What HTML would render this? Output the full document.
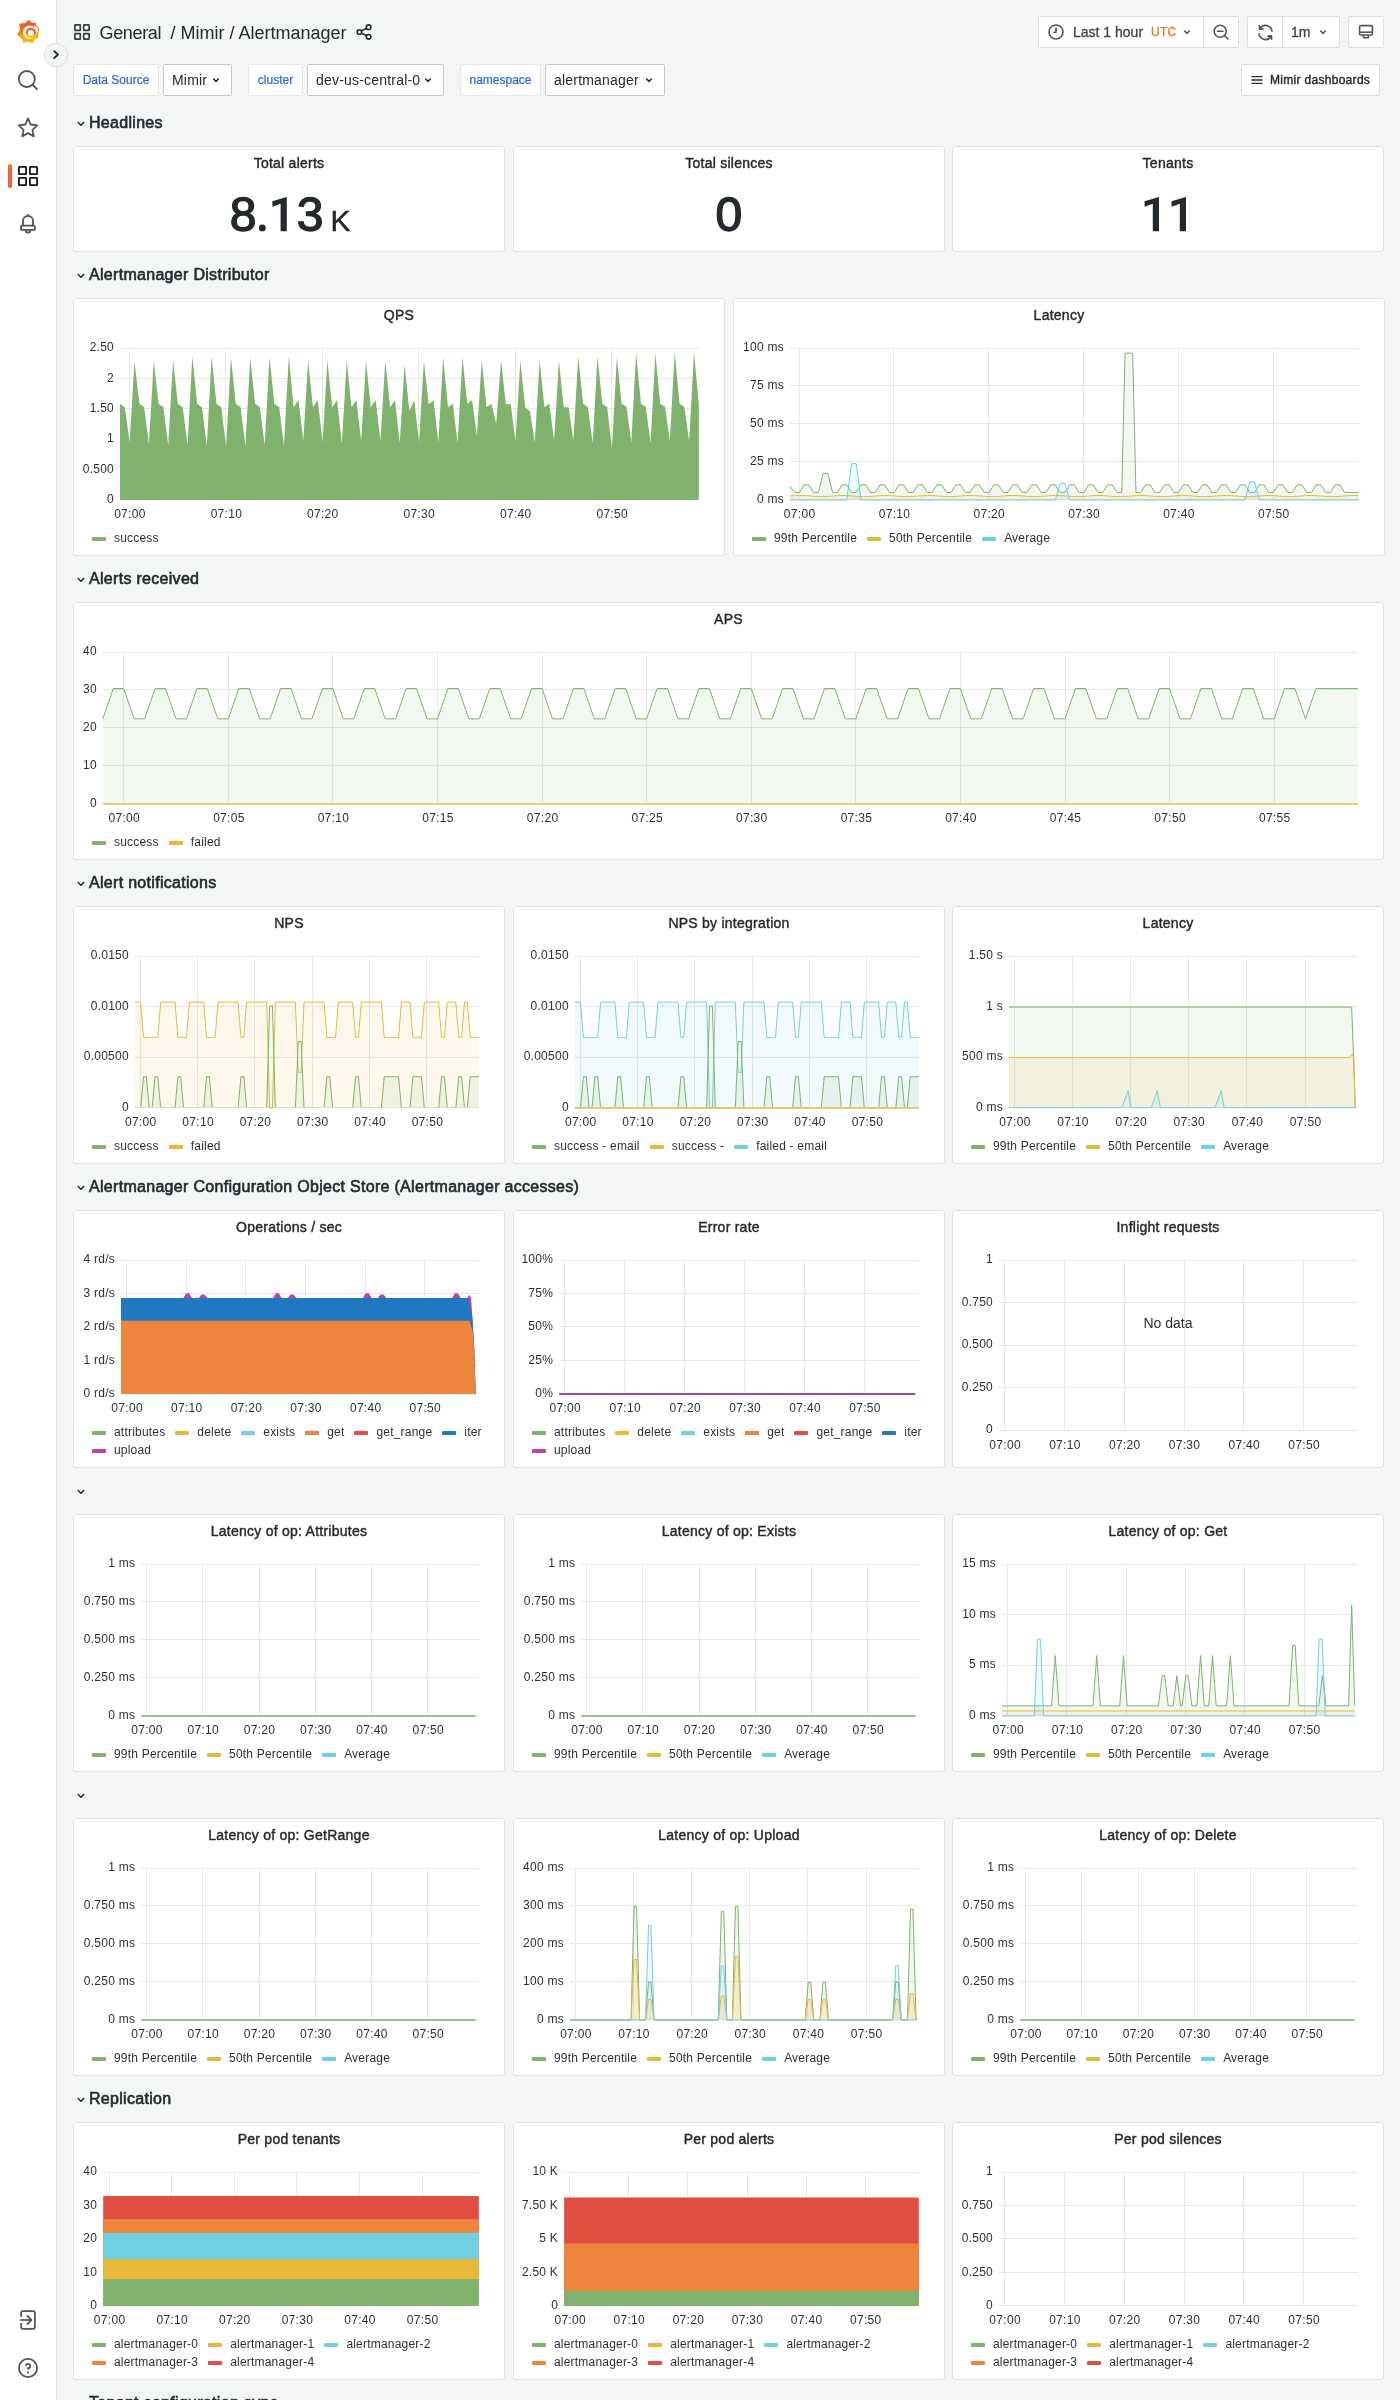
<!DOCTYPE html><html><head><meta charset="utf-8"><style>
*{box-sizing:border-box}
html,body{margin:0;padding:0}
body{width:1400px;height:2400px;overflow:hidden;background:#f4f5f5;position:relative;font-family:"Liberation Sans",sans-serif;color:#24292e}
div,svg{position:absolute}
#sb{left:0;top:0;width:57px;height:2400px;background:#fff;border-right:1px solid #e1e2e3}
.ic{position:absolute}
.pn{background:#fff;border:1px solid #e1e2e3;border-radius:3px}
.pt{text-align:center;font-size:14px;line-height:18px;letter-spacing:0.25px;-webkit-text-stroke:0.42px #24292e}
.rh{left:73px;height:30px;line-height:30px;font-size:16px;padding-left:16px;letter-spacing:0.3px;-webkit-text-stroke:0.6px #24292e}
.rh svg{left:3px;top:11.3px}
.yl{font-size:12px;line-height:16px;text-align:right;white-space:nowrap;color:#2c3036;letter-spacing:0.25px}
.xl{font-size:12px;line-height:16px;width:60px;text-align:center;white-space:nowrap;color:#2c3036;letter-spacing:0.3px}
.lg{font-size:12px;line-height:16px;white-space:nowrap;color:#2c3036;letter-spacing:0.2px}
.li{display:inline-block;margin-right:10px}
.li i{display:inline-block;width:14px;height:4px;border-radius:1px;vertical-align:middle;margin-right:8px;position:relative;top:0px}
.nd{text-align:center;font-size:14px;line-height:18px;color:#2c3036}
.stat{text-align:center;color:#24292e;-webkit-text-stroke:1.4px #24292e}
.btn{background:#fff;border:1px solid #dcdee0;border-radius:2px;height:32px}
.vl{background:#fff;border:1px solid #e4e6e8;border-radius:2px;height:32px;line-height:30px;font-size:12px;color:#2a66dc;text-align:center;-webkit-text-stroke:0.2px #2a66dc}
.vv{background:#fff;border:1px solid #c7c9cc;border-radius:2px;height:32px;line-height:30px;font-size:14px;color:#24292e;padding-left:8px;letter-spacing:0.2px}
</style></head><body><div id="root" style="left:0;top:0;width:1400px;height:2400px;will-change:transform"><div id="sb"></div>
<svg style="left:14px;top:17px" width="28" height="29" viewBox="0 0 1400 1450">
<defs><linearGradient id="gl" x1="0" y1="0" x2="0" y2="1"><stop offset="0.2" stop-color="#F05A28"/><stop offset="0.55" stop-color="#F27A1A"/><stop offset="0.72" stop-color="#FBAE0F"/><stop offset="1" stop-color="#FBB80C"/></linearGradient></defs>
<path fill="url(#gl)" d="M740 140 L860 280 L1090 300 L1130 460 L1220 560 L1250 680 L1200 860 L1230 1010 L1010 1130 L990 1270 L840 1290 L690 1240 L470 1290 L420 1130 L300 1020 L150 880 L260 720 L300 560 L260 340 L560 300 Z"/>
<circle cx="790" cy="760" r="340" fill="#fff"/>
<path d="M1000 420 L1130 400 L1230 560 L1260 760 L1150 760 Z" fill="#fff"/>
<path d="M1030 400 C1150 450 1235 560 1230 720" fill="none" stroke="#F26A22" stroke-width="55"/>
<circle cx="850" cy="800" r="205" fill="none" stroke="url(#gl)" stroke-width="110"/>
<path d="M690 860 C740 960 860 980 900 920" fill="none" stroke="#fff" stroke-width="45"/>
<path d="M700 900 C760 960 850 960 880 915" fill="none" stroke="#F8B21C" stroke-width="35"/>
</svg>
<svg style="left:43px;top:42px" width="26" height="26" viewBox="0 0 26 26"><circle cx="13" cy="13" r="11.6" fill="#f4f5f5" stroke="#dcdde0" stroke-width="1"/><path d="M11.3 9.2 L15 12.6 L11.3 16" fill="none" stroke="#24292e" stroke-width="1.9" stroke-linecap="round" stroke-linejoin="round"/></svg>
<svg style="left:16px;top:68px" width="24" height="24" viewBox="0 0 24 24"><circle cx="10.8" cy="11" r="8" fill="none" stroke="#51565c" stroke-width="1.8"/><path d="M16.6 16.8 L21 21.2" stroke="#51565c" stroke-width="1.9" stroke-linecap="round"/></svg>
<svg style="left:16px;top:116px" width="24" height="24" viewBox="0 0 24 24"><path d="M12.00 2.41 L14.71 8.51 L21.27 9.41 L16.41 13.82 L17.76 20.38 L12.00 17.10 L6.24 20.38 L7.59 13.82 L2.73 9.41 L9.29 8.51 Z" fill="none" stroke="#51565c" stroke-width="1.8" stroke-linejoin="round"/></svg>
<div style="left:8px;top:164px;width:4px;height:24px;border-radius:2px;background:linear-gradient(#f47a20,#f55f3e 30%,#f55f3e)"></div>
<svg style="left:16px;top:164px" width="24" height="24" viewBox="0 0 24 24" fill="none" stroke="#111418" stroke-width="1.8"><rect x="2.9" y="2.9" width="7.2" height="7.2" rx="0.6"/><rect x="13.9" y="2.9" width="7.2" height="7.2" rx="0.6"/><rect x="2.9" y="13.9" width="7.2" height="7.2" rx="0.6"/><rect x="13.9" y="13.9" width="7.2" height="7.2" rx="0.6"/></svg>
<svg style="left:16px;top:212px" width="24" height="24" viewBox="0 0 24 24" fill="none" stroke="#51565c" stroke-width="1.8" stroke-linejoin="round"><path d="M12 2 L12 3.6"/><path d="M7 13.8 L7 9 A5 5 0 0 1 17 9 L17 13.8"/><path d="M5.1 14.4 A1.2 1.2 0 0 1 6.3 13.6 L17.7 13.6 A1.2 1.2 0 0 1 18.9 14.6 L18.9 17.8 L5 17.8 Z"/><path d="M9.6 18.2 A2.4 2.4 0 0 0 14.4 18.2"/></svg>
<svg style="left:16px;top:2308px" width="24" height="24" viewBox="0 0 24 24" fill="none" stroke="#51565c" stroke-width="1.75" stroke-linecap="butt" stroke-linejoin="round"><path d="M5.1 8.8 L5.1 4.8 A1.7 1.7 0 0 1 6.8 3.1 L17.2 3.1 A1.7 1.7 0 0 1 18.9 4.8 L18.9 19.1 A1.7 1.7 0 0 1 17.2 20.8 L6.8 20.8 A1.7 1.7 0 0 1 5.1 19.1 L5.1 15.0"/><path d="M4.2 12 L15.6 12"/><path d="M11 7.4 L15.6 12 L11 16.6"/></svg>
<svg style="left:16px;top:2356px" width="24" height="24" viewBox="0 0 24 24" fill="none" stroke="#51565c" stroke-width="1.75" stroke-linecap="butt"><circle cx="12" cy="12" r="9.1"/><path d="M9.9 9.9 A2.15 2.15 0 1 1 12 12.2 L12 13.6"/><rect x="11.1" y="15.6" width="1.8" height="1.7" fill="#51565c" stroke="none"/></svg>
<svg style="left:73px;top:23px" width="18" height="18" viewBox="0 0 18 18" fill="none" stroke="#3a3f45" stroke-width="1.7"><rect x="1.9" y="1.9" width="5.4" height="5.4" rx="0.4"/><rect x="10.7" y="1.9" width="5.4" height="5.4" rx="0.4"/><rect x="1.9" y="10.7" width="5.4" height="5.4" rx="0.4"/><rect x="10.7" y="10.7" width="5.4" height="5.4" rx="0.4"/></svg>
<div style="left:99.5px;top:22px;font-size:18px;line-height:22px;white-space:nowrap;color:#24292e;letter-spacing:-0.35px">General</div>
<div style="left:170.5px;top:22px;font-size:18px;line-height:22px;white-space:nowrap;color:#24292e">/ Mimir / Alertmanager</div>
<svg style="left:355px;top:23px" width="18" height="18" viewBox="0 0 18 18" fill="none" stroke="#24292e" stroke-width="1.6"><circle cx="13.6" cy="4.2" r="2.3"/><circle cx="4.4" cy="9" r="2.3"/><circle cx="13.6" cy="13.8" r="2.3"/><path d="M6.5 7.9 L11.5 5.3 M6.5 10.1 L11.5 12.7"/></svg>
<div class="btn" style="left:1038px;top:16px;width:201px"></div>
<div style="left:1203px;top:17px;width:1px;height:30px;background:#dcdee0"></div>
<svg style="left:1047px;top:23px" width="18" height="18" viewBox="0 0 18 18" fill="none" stroke="#51565c" stroke-width="1.6" stroke-linecap="round" stroke-linejoin="round"><circle cx="9" cy="9" r="7"/><path d="M9 5.2 L9 9.2 L6.9 9.2"/></svg>
<div style="left:1073px;top:23px;font-size:14px;line-height:18px;color:#3e4349;white-space:nowrap;-webkit-text-stroke:0.3px #3e4349">Last 1 hour</div>
<div style="left:1151px;top:24px;font-size:12px;line-height:16px;color:#e8731a;white-space:nowrap;letter-spacing:0.3px;-webkit-text-stroke:0.25px #e8731a">UTC</div>
<svg style="left:1182px;top:27px" width="10" height="10" viewBox="0 0 10 10"><path d="M2.6 4 L5 6.4 L7.4 4" fill="none" stroke="#51565c" stroke-width="1.5" stroke-linecap="round" stroke-linejoin="round"/></svg>
<svg style="left:1212px;top:23px" width="18" height="18" viewBox="0 0 18 18" fill="none" stroke="#51565c" stroke-width="1.6" stroke-linecap="round"><circle cx="8.2" cy="8.2" r="6"/><path d="M5.4 8.2 L11 8.2 M12.6 12.6 L16 16"/></svg>
<div class="btn" style="left:1247px;top:16px;width:93px"></div>
<div style="left:1282px;top:17px;width:1px;height:30px;background:#dcdee0"></div>
<svg style="left:1255.5px;top:22.5px" width="19" height="19" viewBox="0 0 18 18" fill="none" stroke="#51565c" stroke-width="1.6" stroke-linecap="round" stroke-linejoin="round"><path d="M15.2 7.6 A6.3 6.3 0 0 0 3.6 5.4"/><path d="M3.2 2.6 L3.4 5.8 L6.6 5.6"/><path d="M2.8 10.4 A6.3 6.3 0 0 0 14.4 12.6"/><path d="M14.8 15.4 L14.6 12.2 L11.4 12.4"/></svg>
<div style="left:1291px;top:23px;font-size:14px;line-height:18px;color:#3e4349;-webkit-text-stroke:0.3px #3e4349">1m</div>
<svg style="left:1318px;top:27px" width="10" height="10" viewBox="0 0 10 10"><path d="M2.6 4 L5 6.4 L7.4 4" fill="none" stroke="#51565c" stroke-width="1.5" stroke-linecap="round" stroke-linejoin="round"/></svg>
<div class="btn" style="left:1348px;top:16px;width:36px"></div>
<svg style="left:1357px;top:23px" width="18" height="18" viewBox="0 0 18 18" fill="none" stroke="#51565c" stroke-width="1.6" stroke-linejoin="round"><rect x="2.6" y="2.6" width="12.8" height="9.4" rx="1.2"/><path d="M2.6 9.2 L15.4 9.2"/><path d="M6.6 12 L6.6 14.8 L11.4 14.8 L11.4 12"/></svg>
<div class="vl" style="left:73px;top:64px;width:86px">Data Source</div>
<div class="vv" style="left:163px;top:64px;width:69px">Mimir</div>
<svg style="left:211px;top:75px" width="10" height="10" viewBox="0 0 10 10"><path d="M2.6 4 L5 6.4 L7.4 4" fill="none" stroke="#24292e" stroke-width="1.5" stroke-linecap="round" stroke-linejoin="round"/></svg>
<div class="vl" style="left:248px;top:64px;width:55px">cluster</div>
<div class="vv" style="left:307px;top:64px;width:137px">dev-us-central-0</div>
<svg style="left:423px;top:75px" width="10" height="10" viewBox="0 0 10 10"><path d="M2.6 4 L5 6.4 L7.4 4" fill="none" stroke="#24292e" stroke-width="1.5" stroke-linecap="round" stroke-linejoin="round"/></svg>
<div class="vl" style="left:460px;top:64px;width:81px">namespace</div>
<div class="vv" style="left:545px;top:64px;width:120px">alertmanager</div>
<svg style="left:644px;top:75px" width="10" height="10" viewBox="0 0 10 10"><path d="M2.6 4 L5 6.4 L7.4 4" fill="none" stroke="#24292e" stroke-width="1.5" stroke-linecap="round" stroke-linejoin="round"/></svg>
<div class="btn" style="left:1241px;top:64px;width:139px"></div>
<svg style="left:1249px;top:72px" width="16" height="16" viewBox="0 0 16 16" stroke="#24292e" stroke-width="1.4"><path d="M2.5 4.6 L13.5 4.6 M2.5 8 L13.5 8 M2.5 11.4 L13.5 11.4"/></svg>
<div style="left:1270px;top:72px;font-size:12px;line-height:16px;color:#24292e;white-space:nowrap;letter-spacing:0.3px;-webkit-text-stroke:0.4px #24292e">Mimir dashboards</div>
<div class="rh" style="top:108px"><svg width="10" height="10" viewBox="0 0 10 10"><path d="M2.3 3.5 L5 6.2 L7.7 3.5" fill="none" stroke="#24292e" stroke-width="1.5" stroke-linecap="round" stroke-linejoin="round"/></svg>Headlines</div>
<div class="pn" style="left:73px;top:146px;width:432px;height:106px"></div>
<div class="pt" style="left:73px;top:154px;width:432px">Total alerts</div>
<div class="pn" style="left:513px;top:146px;width:432px;height:106px"></div>
<div class="pt" style="left:513px;top:154px;width:432px">Total silences</div>
<div class="pn" style="left:952px;top:146px;width:432px;height:106px"></div>
<div class="pt" style="left:952px;top:154px;width:432px">Tenants</div>
<div style="left:229.8px;top:186.9px;font-size:48px;line-height:56px;-webkit-text-stroke:1.4px #24292e;color:#24292e;white-space:nowrap">8</div>
<div style="left:296.7px;top:186.9px;font-size:48px;line-height:56px;-webkit-text-stroke:1.4px #24292e;color:#24292e;white-space:nowrap">3</div>
<div style="left:330.4px;top:193px;font-size:30px;line-height:56px;-webkit-text-stroke:0.5px #24292e;color:#24292e">K</div>
<div style="left:715.5px;top:186.9px;font-size:48px;line-height:56px;-webkit-text-stroke:1.4px #24292e;color:#24292e;white-space:nowrap">0</div>
<svg style="left:0;top:0;overflow:visible" width="1" height="1"><path d="M272.3 201.2 L286.6 196.9 L286.8 196.9 L286.8 231.2 L280.6 231.2 L280.6 203.8 L272.5 206.8 Z" fill="#24292e"/><path d="M1144.5 201.2 L1158.8 196.9 L1159.0 196.9 L1159.0 231.2 L1152.8 231.2 L1152.8 203.8 L1144.7 206.8 Z" fill="#24292e"/><path d="M1171.5 201.2 L1185.8 196.9 L1186.0 196.9 L1186.0 231.2 L1179.8 231.2 L1179.8 203.8 L1171.7 206.8 Z" fill="#24292e"/><circle cx="262.3" cy="227.9" r="3.45" fill="#24292e"/></svg>
<div class="rh" style="top:260px"><svg width="10" height="10" viewBox="0 0 10 10"><path d="M2.3 3.5 L5 6.2 L7.7 3.5" fill="none" stroke="#24292e" stroke-width="1.5" stroke-linecap="round" stroke-linejoin="round"/></svg>Alertmanager Distributor</div>
<div class="pn" style="left:73px;top:298px;width:652px;height:258px"></div>
<div class="pt" style="left:73px;top:306px;width:652px">QPS</div>
<svg style="left:0;top:0;overflow:visible" width="1" height="1"><line x1="120.0" y1="499.5" x2="698.8" y2="499.5" stroke="#e7e8e9"/><line x1="120.0" y1="469.5" x2="698.8" y2="469.5" stroke="#e7e8e9"/><line x1="120.0" y1="438.5" x2="698.8" y2="438.5" stroke="#e7e8e9"/><line x1="120.0" y1="408.5" x2="698.8" y2="408.5" stroke="#e7e8e9"/><line x1="120.0" y1="378.5" x2="698.8" y2="378.5" stroke="#e7e8e9"/><line x1="120.0" y1="348.5" x2="698.8" y2="348.5" stroke="#e7e8e9"/><line x1="129.5" y1="348.6" x2="129.5" y2="500.0" stroke="#e7e8e9"/><line x1="225.5" y1="348.6" x2="225.5" y2="500.0" stroke="#e7e8e9"/><line x1="322.5" y1="348.6" x2="322.5" y2="500.0" stroke="#e7e8e9"/><line x1="418.5" y1="348.6" x2="418.5" y2="500.0" stroke="#e7e8e9"/><line x1="515.5" y1="348.6" x2="515.5" y2="500.0" stroke="#e7e8e9"/><line x1="611.5" y1="348.6" x2="611.5" y2="500.0" stroke="#e7e8e9"/><path d="M120.00,403.71 L124.82,407.34 L129.65,442.47 L134.47,361.01 L139.29,403.71 L144.12,407.34 L148.94,443.68 L153.76,361.01 L158.59,403.71 L163.41,407.34 L168.23,444.89 L173.06,360.41 L177.88,403.71 L182.70,407.34 L187.53,444.89 L192.35,356.17 L197.17,403.71 L202.00,407.34 L206.82,446.10 L211.64,356.17 L216.47,403.71 L221.29,407.34 L226.11,446.71 L230.94,357.38 L235.76,403.71 L240.58,407.34 L245.41,446.10 L250.23,357.38 L255.05,403.71 L259.88,407.34 L264.70,444.89 L269.52,356.78 L274.35,403.71 L279.17,407.34 L283.99,446.10 L288.82,356.17 L293.64,407.34 L298.46,400.08 L303.29,440.65 L308.11,360.41 L312.93,407.34 L317.76,400.08 L322.58,442.47 L327.40,361.01 L332.23,407.34 L337.05,400.08 L341.87,443.68 L346.70,361.01 L351.52,407.34 L356.34,400.08 L361.17,440.65 L365.99,361.01 L370.81,407.34 L375.64,400.08 L380.46,440.65 L385.28,360.41 L390.11,407.34 L394.93,400.08 L399.75,443.07 L404.58,364.65 L409.40,410.98 L414.22,400.08 L419.05,442.47 L423.87,361.01 L428.69,404.32 L433.52,400.08 L438.34,442.47 L443.16,357.38 L447.99,407.34 L452.81,403.71 L457.63,443.07 L462.46,357.38 L467.28,403.71 L472.10,400.08 L476.93,435.81 L481.75,360.41 L486.57,407.34 L491.40,403.71 L496.22,423.69 L501.04,360.41 L505.87,404.32 L510.69,403.71 L515.51,441.26 L520.34,361.01 L525.16,407.34 L529.98,411.58 L534.81,442.47 L539.63,361.01 L544.45,407.34 L549.28,403.71 L554.10,440.65 L558.92,361.01 L563.75,407.34 L568.57,407.34 L573.39,440.65 L578.22,356.17 L583.04,403.71 L587.86,407.34 L592.69,443.07 L597.51,356.17 L602.33,403.71 L607.16,407.34 L611.98,448.52 L616.80,357.38 L621.63,403.71 L626.45,406.74 L631.27,442.47 L636.10,353.14 L640.92,403.71 L645.74,406.74 L650.57,443.07 L655.39,353.14 L660.21,403.71 L665.04,406.74 L669.86,441.26 L674.68,352.54 L679.51,403.71 L684.33,406.74 L689.15,441.26 L693.98,352.54 L698.80,403.71 L698.80,500.00 L120.00,500.00 Z" fill="#7EB26D" fill-opacity="1.0"/></svg>
<div class="yl" style="right:1286.0px;top:490.8px">0</div>
<div class="yl" style="right:1286.0px;top:460.5px">0.500</div>
<div class="yl" style="right:1286.0px;top:430.2px">1</div>
<div class="yl" style="right:1286.0px;top:400.0px">1.50</div>
<div class="yl" style="right:1286.0px;top:369.7px">2</div>
<div class="yl" style="right:1286.0px;top:339.4px">2.50</div>
<div class="xl" style="left:99.9px;top:506.1px">07:00</div>
<div class="xl" style="left:196.4px;top:506.1px">07:10</div>
<div class="xl" style="left:292.8px;top:506.1px">07:20</div>
<div class="xl" style="left:389.3px;top:506.1px">07:30</div>
<div class="xl" style="left:485.8px;top:506.1px">07:40</div>
<div class="xl" style="left:582.2px;top:506.1px">07:50</div>
<div class="lg" style="left:92px;top:530.3px"><span class="li"><i style="background:#7EB26D"></i>success</span></div>
<div class="pn" style="left:733px;top:298px;width:652px;height:258px"></div>
<div class="pt" style="left:733px;top:306px;width:652px">Latency</div>
<svg style="left:0;top:0;overflow:visible" width="1" height="1"><line x1="789.9" y1="499.5" x2="1358.8" y2="499.5" stroke="#e7e8e9"/><line x1="789.9" y1="461.5" x2="1358.8" y2="461.5" stroke="#e7e8e9"/><line x1="789.9" y1="423.5" x2="1358.8" y2="423.5" stroke="#e7e8e9"/><line x1="789.9" y1="385.5" x2="1358.8" y2="385.5" stroke="#e7e8e9"/><line x1="789.9" y1="348.5" x2="1358.8" y2="348.5" stroke="#e7e8e9"/><line x1="799.5" y1="348.6" x2="799.5" y2="500.0" stroke="#e7e8e9"/><line x1="893.5" y1="348.6" x2="893.5" y2="500.0" stroke="#e7e8e9"/><line x1="988.5" y1="348.6" x2="988.5" y2="500.0" stroke="#e7e8e9"/><line x1="1083.5" y1="348.6" x2="1083.5" y2="500.0" stroke="#e7e8e9"/><line x1="1178.5" y1="348.6" x2="1178.5" y2="500.0" stroke="#e7e8e9"/><line x1="1273.5" y1="348.6" x2="1273.5" y2="500.0" stroke="#e7e8e9"/><path d="M789.90,486.37 L794.64,492.43 L799.38,492.43 L804.12,484.86 L808.86,484.86 L813.60,492.43 L818.35,492.43 L823.09,473.50 L827.83,473.50 L832.57,492.43 L837.31,492.43 L842.05,484.86 L846.79,484.86 L851.53,492.43 L856.27,492.43 L861.01,484.86 L865.75,484.86 L870.49,492.43 L875.24,492.43 L879.98,484.86 L884.72,484.86 L889.46,492.43 L894.20,492.43 L898.94,484.86 L903.68,484.86 L908.42,492.43 L913.16,492.43 L917.90,484.86 L922.64,484.86 L927.38,492.43 L932.12,492.43 L936.87,484.86 L941.61,484.86 L946.35,492.43 L951.09,492.43 L955.83,484.86 L960.57,484.86 L965.31,492.43 L970.05,492.43 L974.79,484.86 L979.53,484.86 L984.27,492.43 L989.01,492.43 L993.76,484.86 L998.50,484.86 L1003.24,492.43 L1007.98,492.43 L1012.72,484.86 L1017.46,484.86 L1022.20,492.43 L1026.94,492.43 L1031.68,484.86 L1036.42,484.86 L1041.16,492.43 L1045.90,492.43 L1050.65,484.86 L1055.39,484.86 L1060.13,492.43 L1064.87,492.43 L1069.61,484.86 L1074.35,484.86 L1079.09,492.43 L1083.83,492.43 L1088.57,484.86 L1093.31,484.86 L1098.05,492.43 L1102.80,492.43 L1107.54,484.86 L1112.28,484.86 L1117.02,492.43 L1121.76,492.43 L1125.08,353.14 L1132.66,353.14 L1135.98,492.43 L1140.72,492.43 L1145.46,484.86 L1150.20,484.86 L1154.94,492.43 L1159.68,492.43 L1164.43,484.86 L1169.17,484.86 L1173.91,492.43 L1178.65,492.43 L1183.39,484.86 L1188.13,484.86 L1192.87,492.43 L1197.61,492.43 L1202.35,484.86 L1207.09,484.86 L1211.83,492.43 L1216.57,492.43 L1221.32,484.86 L1226.06,484.86 L1230.80,492.43 L1235.54,492.43 L1240.28,484.86 L1245.02,484.86 L1249.76,492.43 L1254.50,492.43 L1259.24,484.86 L1263.98,484.86 L1268.72,492.43 L1273.46,492.43 L1278.21,484.86 L1282.95,484.86 L1287.69,492.43 L1292.43,492.43 L1297.17,484.86 L1301.91,484.86 L1306.65,492.43 L1311.39,492.43 L1316.13,484.86 L1320.87,484.86 L1325.61,492.43 L1330.36,492.43 L1335.10,484.86 L1339.84,484.86 L1344.58,492.43 L1349.32,492.43 L1354.06,492.43 L1358.80,492.43 L1358.80,500.00 L789.90,500.00 Z" fill="#7EB26D" fill-opacity="0.1"/><path d="M789.90,486.37 L794.64,492.43 L799.38,492.43 L804.12,484.86 L808.86,484.86 L813.60,492.43 L818.35,492.43 L823.09,473.50 L827.83,473.50 L832.57,492.43 L837.31,492.43 L842.05,484.86 L846.79,484.86 L851.53,492.43 L856.27,492.43 L861.01,484.86 L865.75,484.86 L870.49,492.43 L875.24,492.43 L879.98,484.86 L884.72,484.86 L889.46,492.43 L894.20,492.43 L898.94,484.86 L903.68,484.86 L908.42,492.43 L913.16,492.43 L917.90,484.86 L922.64,484.86 L927.38,492.43 L932.12,492.43 L936.87,484.86 L941.61,484.86 L946.35,492.43 L951.09,492.43 L955.83,484.86 L960.57,484.86 L965.31,492.43 L970.05,492.43 L974.79,484.86 L979.53,484.86 L984.27,492.43 L989.01,492.43 L993.76,484.86 L998.50,484.86 L1003.24,492.43 L1007.98,492.43 L1012.72,484.86 L1017.46,484.86 L1022.20,492.43 L1026.94,492.43 L1031.68,484.86 L1036.42,484.86 L1041.16,492.43 L1045.90,492.43 L1050.65,484.86 L1055.39,484.86 L1060.13,492.43 L1064.87,492.43 L1069.61,484.86 L1074.35,484.86 L1079.09,492.43 L1083.83,492.43 L1088.57,484.86 L1093.31,484.86 L1098.05,492.43 L1102.80,492.43 L1107.54,484.86 L1112.28,484.86 L1117.02,492.43 L1121.76,492.43 L1125.08,353.14 L1132.66,353.14 L1135.98,492.43 L1140.72,492.43 L1145.46,484.86 L1150.20,484.86 L1154.94,492.43 L1159.68,492.43 L1164.43,484.86 L1169.17,484.86 L1173.91,492.43 L1178.65,492.43 L1183.39,484.86 L1188.13,484.86 L1192.87,492.43 L1197.61,492.43 L1202.35,484.86 L1207.09,484.86 L1211.83,492.43 L1216.57,492.43 L1221.32,484.86 L1226.06,484.86 L1230.80,492.43 L1235.54,492.43 L1240.28,484.86 L1245.02,484.86 L1249.76,492.43 L1254.50,492.43 L1259.24,484.86 L1263.98,484.86 L1268.72,492.43 L1273.46,492.43 L1278.21,484.86 L1282.95,484.86 L1287.69,492.43 L1292.43,492.43 L1297.17,484.86 L1301.91,484.86 L1306.65,492.43 L1311.39,492.43 L1316.13,484.86 L1320.87,484.86 L1325.61,492.43 L1330.36,492.43 L1335.10,484.86 L1339.84,484.86 L1344.58,492.43 L1349.32,492.43 L1354.06,492.43 L1358.80,492.43" fill="none" stroke="#7EB26D" stroke-width="1" stroke-opacity="1" stroke-linejoin="round"/><path d="M789.90,496.06 L794.64,495.67 L799.38,495.47 L804.12,495.54 L808.86,495.86 L813.60,496.28 L818.35,496.59 L823.09,496.66 L827.83,496.45 L832.57,496.05 L837.31,495.67 L842.05,495.47 L846.79,495.55 L851.53,495.87 L856.27,496.29 L861.01,496.60 L865.75,496.66 L870.49,496.44 L875.24,496.04 L879.98,495.66 L884.72,495.46 L889.46,495.55 L894.20,495.88 L898.94,496.29 L903.68,496.60 L908.42,496.65 L913.16,496.43 L917.90,496.03 L922.64,495.65 L927.38,495.46 L932.12,495.56 L936.87,495.89 L941.61,496.30 L946.35,496.61 L951.09,496.65 L955.83,496.42 L960.57,496.02 L965.31,495.64 L970.05,495.46 L974.79,495.56 L979.53,495.90 L984.27,496.31 L989.01,496.61 L993.76,496.65 L998.50,496.41 L1003.24,496.01 L1007.98,495.64 L1012.72,495.46 L1017.46,495.57 L1022.20,495.91 L1026.94,496.32 L1031.68,496.61 L1036.42,496.65 L1041.16,496.41 L1045.90,496.00 L1050.65,495.63 L1055.39,495.46 L1060.13,495.57 L1064.87,495.92 L1069.61,496.33 L1074.35,496.62 L1079.09,496.64 L1083.83,496.40 L1088.57,495.99 L1093.31,495.62 L1098.05,495.46 L1102.80,495.58 L1107.54,495.93 L1112.28,496.34 L1117.02,496.62 L1121.76,496.64 L1126.50,496.39 L1131.24,495.98 L1135.98,495.61 L1140.72,495.46 L1145.46,495.59 L1150.20,495.94 L1154.94,496.35 L1159.68,496.63 L1164.43,496.64 L1169.17,496.38 L1173.91,495.97 L1178.65,495.61 L1183.39,495.46 L1188.13,495.59 L1192.87,495.95 L1197.61,496.36 L1202.35,496.63 L1207.09,496.63 L1211.83,496.37 L1216.57,495.96 L1221.32,495.60 L1226.06,495.46 L1230.80,495.60 L1235.54,495.96 L1240.28,496.37 L1245.02,496.63 L1249.76,496.63 L1254.50,496.36 L1259.24,495.95 L1263.98,495.59 L1268.72,495.46 L1273.46,495.61 L1278.21,495.97 L1282.95,496.38 L1287.69,496.64 L1292.43,496.63 L1297.17,496.35 L1301.91,495.94 L1306.65,495.59 L1311.39,495.46 L1316.13,495.61 L1320.87,495.98 L1325.61,496.39 L1330.36,496.64 L1335.10,496.62 L1339.84,496.34 L1344.58,495.93 L1349.32,495.58 L1354.06,495.46 L1358.80,495.62 L1358.80,500.00 L789.90,500.00 Z" fill="#EAB839" fill-opacity="0.1"/><path d="M789.90,496.06 L794.64,495.67 L799.38,495.47 L804.12,495.54 L808.86,495.86 L813.60,496.28 L818.35,496.59 L823.09,496.66 L827.83,496.45 L832.57,496.05 L837.31,495.67 L842.05,495.47 L846.79,495.55 L851.53,495.87 L856.27,496.29 L861.01,496.60 L865.75,496.66 L870.49,496.44 L875.24,496.04 L879.98,495.66 L884.72,495.46 L889.46,495.55 L894.20,495.88 L898.94,496.29 L903.68,496.60 L908.42,496.65 L913.16,496.43 L917.90,496.03 L922.64,495.65 L927.38,495.46 L932.12,495.56 L936.87,495.89 L941.61,496.30 L946.35,496.61 L951.09,496.65 L955.83,496.42 L960.57,496.02 L965.31,495.64 L970.05,495.46 L974.79,495.56 L979.53,495.90 L984.27,496.31 L989.01,496.61 L993.76,496.65 L998.50,496.41 L1003.24,496.01 L1007.98,495.64 L1012.72,495.46 L1017.46,495.57 L1022.20,495.91 L1026.94,496.32 L1031.68,496.61 L1036.42,496.65 L1041.16,496.41 L1045.90,496.00 L1050.65,495.63 L1055.39,495.46 L1060.13,495.57 L1064.87,495.92 L1069.61,496.33 L1074.35,496.62 L1079.09,496.64 L1083.83,496.40 L1088.57,495.99 L1093.31,495.62 L1098.05,495.46 L1102.80,495.58 L1107.54,495.93 L1112.28,496.34 L1117.02,496.62 L1121.76,496.64 L1126.50,496.39 L1131.24,495.98 L1135.98,495.61 L1140.72,495.46 L1145.46,495.59 L1150.20,495.94 L1154.94,496.35 L1159.68,496.63 L1164.43,496.64 L1169.17,496.38 L1173.91,495.97 L1178.65,495.61 L1183.39,495.46 L1188.13,495.59 L1192.87,495.95 L1197.61,496.36 L1202.35,496.63 L1207.09,496.63 L1211.83,496.37 L1216.57,495.96 L1221.32,495.60 L1226.06,495.46 L1230.80,495.60 L1235.54,495.96 L1240.28,496.37 L1245.02,496.63 L1249.76,496.63 L1254.50,496.36 L1259.24,495.95 L1263.98,495.59 L1268.72,495.46 L1273.46,495.61 L1278.21,495.97 L1282.95,496.38 L1287.69,496.64 L1292.43,496.63 L1297.17,496.35 L1301.91,495.94 L1306.65,495.59 L1311.39,495.46 L1316.13,495.61 L1320.87,495.98 L1325.61,496.39 L1330.36,496.64 L1335.10,496.62 L1339.84,496.34 L1344.58,495.93 L1349.32,495.58 L1354.06,495.46 L1358.80,495.62" fill="none" stroke="#EAB839" stroke-width="1" stroke-opacity="1" stroke-linejoin="round"/><path d="M789.90,500.00 L794.64,500.00 L799.38,500.00 L804.12,500.00 L808.86,500.00 L813.60,500.00 L818.35,500.00 L823.09,500.00 L827.83,500.00 L832.57,500.00 L837.31,500.00 L842.05,500.00 L846.79,500.00 L851.53,463.66 L856.27,463.66 L861.01,500.00 L865.75,500.00 L870.49,500.00 L875.24,500.00 L879.98,500.00 L884.72,500.00 L889.46,500.00 L894.20,500.00 L898.94,500.00 L903.68,500.00 L908.42,500.00 L913.16,500.00 L917.90,500.00 L922.64,500.00 L927.38,500.00 L932.12,500.00 L936.87,500.00 L941.61,500.00 L946.35,500.00 L951.09,500.00 L955.83,500.00 L960.57,500.00 L965.31,500.00 L970.05,500.00 L974.79,500.00 L979.53,500.00 L984.27,500.00 L989.01,500.00 L993.76,500.00 L998.50,500.00 L1003.24,500.00 L1007.98,500.00 L1012.72,500.00 L1017.46,500.00 L1022.20,500.00 L1026.94,500.00 L1031.68,500.00 L1036.42,500.00 L1041.16,500.00 L1045.90,500.00 L1050.65,500.00 L1055.39,500.00 L1060.13,483.35 L1064.87,483.35 L1069.61,500.00 L1074.35,500.00 L1079.09,500.00 L1083.83,500.00 L1088.57,500.00 L1093.31,500.00 L1098.05,500.00 L1102.80,500.00 L1107.54,500.00 L1112.28,500.00 L1117.02,500.00 L1121.76,500.00 L1126.50,500.00 L1131.24,500.00 L1135.98,500.00 L1140.72,500.00 L1145.46,500.00 L1150.20,500.00 L1154.94,500.00 L1159.68,500.00 L1164.43,500.00 L1169.17,500.00 L1173.91,500.00 L1178.65,500.00 L1183.39,500.00 L1188.13,500.00 L1192.87,500.00 L1197.61,500.00 L1202.35,500.00 L1207.09,500.00 L1211.83,500.00 L1216.57,500.00 L1221.32,500.00 L1226.06,500.00 L1230.80,500.00 L1235.54,500.00 L1240.28,500.00 L1245.02,500.00 L1249.76,481.83 L1254.50,481.83 L1259.24,500.00 L1263.98,500.00 L1268.72,500.00 L1273.46,500.00 L1278.21,500.00 L1282.95,500.00 L1287.69,500.00 L1292.43,500.00 L1297.17,500.00 L1301.91,500.00 L1306.65,500.00 L1311.39,500.00 L1316.13,500.00 L1320.87,500.00 L1325.61,500.00 L1330.36,500.00 L1335.10,500.00 L1339.84,500.00 L1344.58,500.00 L1349.32,500.00 L1354.06,500.00 L1358.80,500.00 L1358.80,500.00 L789.90,500.00 Z" fill="#6ED0E0" fill-opacity="0.1"/><path d="M789.90,500.00 L794.64,500.00 L799.38,500.00 L804.12,500.00 L808.86,500.00 L813.60,500.00 L818.35,500.00 L823.09,500.00 L827.83,500.00 L832.57,500.00 L837.31,500.00 L842.05,500.00 L846.79,500.00 L851.53,463.66 L856.27,463.66 L861.01,500.00 L865.75,500.00 L870.49,500.00 L875.24,500.00 L879.98,500.00 L884.72,500.00 L889.46,500.00 L894.20,500.00 L898.94,500.00 L903.68,500.00 L908.42,500.00 L913.16,500.00 L917.90,500.00 L922.64,500.00 L927.38,500.00 L932.12,500.00 L936.87,500.00 L941.61,500.00 L946.35,500.00 L951.09,500.00 L955.83,500.00 L960.57,500.00 L965.31,500.00 L970.05,500.00 L974.79,500.00 L979.53,500.00 L984.27,500.00 L989.01,500.00 L993.76,500.00 L998.50,500.00 L1003.24,500.00 L1007.98,500.00 L1012.72,500.00 L1017.46,500.00 L1022.20,500.00 L1026.94,500.00 L1031.68,500.00 L1036.42,500.00 L1041.16,500.00 L1045.90,500.00 L1050.65,500.00 L1055.39,500.00 L1060.13,483.35 L1064.87,483.35 L1069.61,500.00 L1074.35,500.00 L1079.09,500.00 L1083.83,500.00 L1088.57,500.00 L1093.31,500.00 L1098.05,500.00 L1102.80,500.00 L1107.54,500.00 L1112.28,500.00 L1117.02,500.00 L1121.76,500.00 L1126.50,500.00 L1131.24,500.00 L1135.98,500.00 L1140.72,500.00 L1145.46,500.00 L1150.20,500.00 L1154.94,500.00 L1159.68,500.00 L1164.43,500.00 L1169.17,500.00 L1173.91,500.00 L1178.65,500.00 L1183.39,500.00 L1188.13,500.00 L1192.87,500.00 L1197.61,500.00 L1202.35,500.00 L1207.09,500.00 L1211.83,500.00 L1216.57,500.00 L1221.32,500.00 L1226.06,500.00 L1230.80,500.00 L1235.54,500.00 L1240.28,500.00 L1245.02,500.00 L1249.76,481.83 L1254.50,481.83 L1259.24,500.00 L1263.98,500.00 L1268.72,500.00 L1273.46,500.00 L1278.21,500.00 L1282.95,500.00 L1287.69,500.00 L1292.43,500.00 L1297.17,500.00 L1301.91,500.00 L1306.65,500.00 L1311.39,500.00 L1316.13,500.00 L1320.87,500.00 L1325.61,500.00 L1330.36,500.00 L1335.10,500.00 L1339.84,500.00 L1344.58,500.00 L1349.32,500.00 L1354.06,500.00 L1358.80,500.00" fill="none" stroke="#6ED0E0" stroke-width="1" stroke-opacity="1" stroke-linejoin="round"/></svg>
<div class="yl" style="right:616.1px;top:490.8px">0 ms</div>
<div class="yl" style="right:616.1px;top:452.9px">25 ms</div>
<div class="yl" style="right:616.1px;top:415.1px">50 ms</div>
<div class="yl" style="right:616.1px;top:377.3px">75 ms</div>
<div class="yl" style="right:616.1px;top:339.4px">100 ms</div>
<div class="xl" style="left:769.6px;top:506.1px">07:00</div>
<div class="xl" style="left:864.5px;top:506.1px">07:10</div>
<div class="xl" style="left:959.3px;top:506.1px">07:20</div>
<div class="xl" style="left:1054.1px;top:506.1px">07:30</div>
<div class="xl" style="left:1148.9px;top:506.1px">07:40</div>
<div class="xl" style="left:1243.7px;top:506.1px">07:50</div>
<div class="lg" style="left:752px;top:530.3px"><span class="li"><i style="background:#7EB26D"></i>99th Percentile</span><span class="li"><i style="background:#EAB839"></i>50th Percentile</span><span class="li"><i style="background:#6ED0E0"></i>Average</span></div>
<div class="rh" style="top:564px"><svg width="10" height="10" viewBox="0 0 10 10"><path d="M2.3 3.5 L5 6.2 L7.7 3.5" fill="none" stroke="#24292e" stroke-width="1.5" stroke-linecap="round" stroke-linejoin="round"/></svg>Alerts received</div>
<div class="pn" style="left:73px;top:602px;width:1311px;height:258px"></div>
<div class="pt" style="left:73px;top:610px;width:1311px">APS</div>
<svg style="left:0;top:0;overflow:visible" width="1" height="1"><line x1="102.8" y1="803.5" x2="1357.8" y2="803.5" stroke="#e7e8e9"/><line x1="102.8" y1="765.5" x2="1357.8" y2="765.5" stroke="#e7e8e9"/><line x1="102.8" y1="727.5" x2="1357.8" y2="727.5" stroke="#e7e8e9"/><line x1="102.8" y1="689.5" x2="1357.8" y2="689.5" stroke="#e7e8e9"/><line x1="102.8" y1="652.5" x2="1357.8" y2="652.5" stroke="#e7e8e9"/><line x1="123.5" y1="652.6" x2="123.5" y2="804.0" stroke="#e7e8e9"/><line x1="228.5" y1="652.6" x2="228.5" y2="804.0" stroke="#e7e8e9"/><line x1="332.5" y1="652.6" x2="332.5" y2="804.0" stroke="#e7e8e9"/><line x1="437.5" y1="652.6" x2="437.5" y2="804.0" stroke="#e7e8e9"/><line x1="542.5" y1="652.6" x2="542.5" y2="804.0" stroke="#e7e8e9"/><line x1="646.5" y1="652.6" x2="646.5" y2="804.0" stroke="#e7e8e9"/><line x1="751.5" y1="652.6" x2="751.5" y2="804.0" stroke="#e7e8e9"/><line x1="855.5" y1="652.6" x2="855.5" y2="804.0" stroke="#e7e8e9"/><line x1="960.5" y1="652.6" x2="960.5" y2="804.0" stroke="#e7e8e9"/><line x1="1065.5" y1="652.6" x2="1065.5" y2="804.0" stroke="#e7e8e9"/><line x1="1169.5" y1="652.6" x2="1169.5" y2="804.0" stroke="#e7e8e9"/><line x1="1274.5" y1="652.6" x2="1274.5" y2="804.0" stroke="#e7e8e9"/><path d="M102.80,718.84 L113.26,688.56 L123.72,688.56 L134.18,718.84 L144.63,718.84 L155.09,688.56 L165.55,688.56 L176.01,718.84 L186.47,718.84 L196.93,688.56 L207.38,688.56 L217.84,718.84 L228.30,718.84 L238.76,688.56 L249.22,688.56 L259.68,718.84 L270.13,718.84 L280.59,688.56 L291.05,688.56 L301.51,718.84 L311.97,718.84 L322.43,688.56 L332.88,688.56 L343.34,718.84 L353.80,718.84 L364.26,688.56 L374.72,688.56 L385.18,718.84 L395.63,718.84 L406.09,688.56 L416.55,688.56 L427.01,718.84 L437.47,718.84 L447.93,688.56 L458.38,688.56 L468.84,718.84 L479.30,718.84 L489.76,688.56 L500.22,688.56 L510.68,718.84 L521.13,718.84 L531.59,688.56 L542.05,688.56 L552.51,718.84 L562.97,718.84 L573.42,688.56 L583.88,688.56 L594.34,718.84 L604.80,718.84 L615.26,688.56 L625.72,688.56 L636.17,718.84 L646.63,718.84 L657.09,688.56 L667.55,688.56 L678.01,718.84 L688.47,718.84 L698.92,688.56 L709.38,688.56 L719.84,718.84 L730.30,718.84 L740.76,688.56 L751.22,688.56 L761.67,718.84 L772.13,718.84 L782.59,688.56 L793.05,688.56 L803.51,718.84 L813.97,718.84 L824.42,688.56 L834.88,688.56 L845.34,718.84 L855.80,718.84 L866.26,688.56 L876.72,688.56 L887.17,718.84 L897.63,718.84 L908.09,688.56 L918.55,688.56 L929.01,718.84 L939.47,718.84 L949.92,688.56 L960.38,688.56 L970.84,718.84 L981.30,718.84 L991.76,688.56 L1002.22,688.56 L1012.67,718.84 L1023.13,718.84 L1033.59,688.56 L1044.05,688.56 L1054.51,718.84 L1064.97,718.84 L1075.42,688.56 L1085.88,688.56 L1096.34,718.84 L1106.80,718.84 L1117.26,688.56 L1127.72,688.56 L1138.17,718.84 L1148.63,718.84 L1159.09,688.56 L1169.55,688.56 L1180.01,718.84 L1190.47,718.84 L1200.92,688.56 L1211.38,688.56 L1221.84,718.84 L1232.30,718.84 L1242.76,688.56 L1253.22,688.56 L1263.67,718.84 L1274.13,718.84 L1284.59,688.56 L1295.05,688.56 L1305.51,718.84 L1315.97,688.56 L1326.42,688.56 L1336.88,688.56 L1347.34,688.56 L1357.80,688.56 L1357.80,804.00 L102.80,804.00 Z" fill="#7EB26D" fill-opacity="0.1"/><path d="M102.80,718.84 L113.26,688.56 L123.72,688.56 L134.18,718.84 L144.63,718.84 L155.09,688.56 L165.55,688.56 L176.01,718.84 L186.47,718.84 L196.93,688.56 L207.38,688.56 L217.84,718.84 L228.30,718.84 L238.76,688.56 L249.22,688.56 L259.68,718.84 L270.13,718.84 L280.59,688.56 L291.05,688.56 L301.51,718.84 L311.97,718.84 L322.43,688.56 L332.88,688.56 L343.34,718.84 L353.80,718.84 L364.26,688.56 L374.72,688.56 L385.18,718.84 L395.63,718.84 L406.09,688.56 L416.55,688.56 L427.01,718.84 L437.47,718.84 L447.93,688.56 L458.38,688.56 L468.84,718.84 L479.30,718.84 L489.76,688.56 L500.22,688.56 L510.68,718.84 L521.13,718.84 L531.59,688.56 L542.05,688.56 L552.51,718.84 L562.97,718.84 L573.42,688.56 L583.88,688.56 L594.34,718.84 L604.80,718.84 L615.26,688.56 L625.72,688.56 L636.17,718.84 L646.63,718.84 L657.09,688.56 L667.55,688.56 L678.01,718.84 L688.47,718.84 L698.92,688.56 L709.38,688.56 L719.84,718.84 L730.30,718.84 L740.76,688.56 L751.22,688.56 L761.67,718.84 L772.13,718.84 L782.59,688.56 L793.05,688.56 L803.51,718.84 L813.97,718.84 L824.42,688.56 L834.88,688.56 L845.34,718.84 L855.80,718.84 L866.26,688.56 L876.72,688.56 L887.17,718.84 L897.63,718.84 L908.09,688.56 L918.55,688.56 L929.01,718.84 L939.47,718.84 L949.92,688.56 L960.38,688.56 L970.84,718.84 L981.30,718.84 L991.76,688.56 L1002.22,688.56 L1012.67,718.84 L1023.13,718.84 L1033.59,688.56 L1044.05,688.56 L1054.51,718.84 L1064.97,718.84 L1075.42,688.56 L1085.88,688.56 L1096.34,718.84 L1106.80,718.84 L1117.26,688.56 L1127.72,688.56 L1138.17,718.84 L1148.63,718.84 L1159.09,688.56 L1169.55,688.56 L1180.01,718.84 L1190.47,718.84 L1200.92,688.56 L1211.38,688.56 L1221.84,718.84 L1232.30,718.84 L1242.76,688.56 L1253.22,688.56 L1263.67,718.84 L1274.13,718.84 L1284.59,688.56 L1295.05,688.56 L1305.51,718.84 L1315.97,688.56 L1326.42,688.56 L1336.88,688.56 L1347.34,688.56 L1357.80,688.56" fill="none" stroke="#7EB26D" stroke-width="1" stroke-opacity="1" stroke-linejoin="round"/><path d="M102.80,804.00 L1357.80,804.00" fill="none" stroke="#EAB839" stroke-width="2" stroke-opacity="0.65" stroke-linejoin="round"/></svg>
<div class="yl" style="right:1303.2px;top:794.8px">0</div>
<div class="yl" style="right:1303.2px;top:756.9px">10</div>
<div class="yl" style="right:1303.2px;top:719.1px">20</div>
<div class="yl" style="right:1303.2px;top:681.2px">30</div>
<div class="yl" style="right:1303.2px;top:643.4px">40</div>
<div class="xl" style="left:94.3px;top:810.1px">07:00</div>
<div class="xl" style="left:198.9px;top:810.1px">07:05</div>
<div class="xl" style="left:303.4px;top:810.1px">07:10</div>
<div class="xl" style="left:408.0px;top:810.1px">07:15</div>
<div class="xl" style="left:512.6px;top:810.1px">07:20</div>
<div class="xl" style="left:617.2px;top:810.1px">07:25</div>
<div class="xl" style="left:721.8px;top:810.1px">07:30</div>
<div class="xl" style="left:826.4px;top:810.1px">07:35</div>
<div class="xl" style="left:930.9px;top:810.1px">07:40</div>
<div class="xl" style="left:1035.5px;top:810.1px">07:45</div>
<div class="xl" style="left:1140.1px;top:810.1px">07:50</div>
<div class="xl" style="left:1244.7px;top:810.1px">07:55</div>
<div class="lg" style="left:92px;top:834.3px"><span class="li"><i style="background:#7EB26D"></i>success</span><span class="li"><i style="background:#EAB839"></i>failed</span></div>
<div class="rh" style="top:868px"><svg width="10" height="10" viewBox="0 0 10 10"><path d="M2.3 3.5 L5 6.2 L7.7 3.5" fill="none" stroke="#24292e" stroke-width="1.5" stroke-linecap="round" stroke-linejoin="round"/></svg>Alert notifications</div>
<div class="pn" style="left:73px;top:906px;width:432px;height:258px"></div>
<div class="pt" style="left:73px;top:914px;width:432px">NPS</div>
<svg style="left:0;top:0;overflow:visible" width="1" height="1"><line x1="134.9" y1="1107.5" x2="478.8" y2="1107.5" stroke="#e7e8e9"/><line x1="134.9" y1="1057.5" x2="478.8" y2="1057.5" stroke="#e7e8e9"/><line x1="134.9" y1="1006.5" x2="478.8" y2="1006.5" stroke="#e7e8e9"/><line x1="134.9" y1="956.5" x2="478.8" y2="956.5" stroke="#e7e8e9"/><line x1="140.5" y1="956.6" x2="140.5" y2="1108.0" stroke="#e7e8e9"/><line x1="197.5" y1="956.6" x2="197.5" y2="1108.0" stroke="#e7e8e9"/><line x1="254.5" y1="956.6" x2="254.5" y2="1108.0" stroke="#e7e8e9"/><line x1="312.5" y1="956.6" x2="312.5" y2="1108.0" stroke="#e7e8e9"/><line x1="369.5" y1="956.6" x2="369.5" y2="1108.0" stroke="#e7e8e9"/><line x1="426.5" y1="956.6" x2="426.5" y2="1108.0" stroke="#e7e8e9"/><path d="M134.90,1002.02 L137.77,1002.02 L140.63,1002.02 L143.50,1037.35 L146.36,1037.35 L149.23,1037.35 L152.09,1037.35 L154.96,1037.35 L157.83,1037.35 L160.69,1002.02 L163.56,1002.02 L166.42,1002.02 L169.29,1002.02 L172.16,1002.02 L175.02,1002.02 L177.89,1037.35 L180.75,1037.35 L183.62,1037.35 L186.49,1037.35 L189.35,1002.02 L192.22,1002.02 L195.08,1002.02 L197.95,1002.02 L200.81,1002.02 L203.68,1002.02 L206.55,1037.35 L209.41,1037.35 L212.28,1037.35 L215.14,1037.35 L218.01,1002.02 L220.88,1002.02 L223.74,1002.02 L226.61,1002.02 L229.47,1002.02 L232.34,1002.02 L235.20,1002.02 L238.07,1002.02 L240.94,1037.35 L243.80,1037.35 L246.67,1002.02 L249.53,1002.02 L252.40,1002.02 L255.26,1002.02 L258.13,1002.02 L261.00,1002.02 L263.86,1002.02 L266.73,1002.02 L269.59,1108.00 L272.46,1108.00 L275.33,1002.02 L278.19,1002.02 L281.06,1002.02 L283.92,1002.02 L286.79,1002.02 L289.65,1002.02 L292.52,1002.02 L295.39,1002.02 L298.25,1072.27 L301.12,1072.27 L303.98,1002.02 L306.85,1002.02 L309.72,1002.02 L312.58,1002.02 L315.45,1002.02 L318.31,1002.02 L321.18,1002.02 L324.05,1002.02 L326.91,1037.35 L329.78,1037.35 L332.64,1037.35 L335.51,1037.35 L338.37,1002.02 L341.24,1002.02 L344.11,1002.02 L346.97,1002.02 L349.84,1002.02 L352.70,1002.02 L355.57,1037.35 L358.44,1037.35 L361.30,1002.02 L364.17,1002.02 L367.03,1002.02 L369.90,1002.02 L372.76,1002.02 L375.63,1002.02 L378.50,1002.02 L381.36,1002.02 L384.23,1037.35 L387.09,1037.35 L389.96,1037.35 L392.82,1037.35 L395.69,1037.35 L398.56,1037.35 L401.42,1002.02 L404.29,1002.02 L407.15,1002.02 L410.02,1002.02 L412.89,1037.35 L415.75,1037.35 L418.62,1037.35 L421.48,1037.35 L424.35,1002.02 L427.22,1002.02 L430.08,1002.02 L432.95,1002.02 L435.81,1002.02 L438.68,1002.02 L441.54,1037.35 L444.41,1037.35 L447.28,1002.02 L450.14,1002.02 L453.01,1002.02 L455.87,1002.02 L458.74,1037.35 L461.61,1037.35 L464.47,1002.02 L467.34,1002.02 L470.20,1037.35 L473.07,1037.35 L475.93,1037.35 L478.80,1037.35 L478.80,1108.00 L134.90,1108.00 Z" fill="#EAB839" fill-opacity="0.1"/><path d="M134.90,1002.02 L137.77,1002.02 L140.63,1002.02 L143.50,1037.35 L146.36,1037.35 L149.23,1037.35 L152.09,1037.35 L154.96,1037.35 L157.83,1037.35 L160.69,1002.02 L163.56,1002.02 L166.42,1002.02 L169.29,1002.02 L172.16,1002.02 L175.02,1002.02 L177.89,1037.35 L180.75,1037.35 L183.62,1037.35 L186.49,1037.35 L189.35,1002.02 L192.22,1002.02 L195.08,1002.02 L197.95,1002.02 L200.81,1002.02 L203.68,1002.02 L206.55,1037.35 L209.41,1037.35 L212.28,1037.35 L215.14,1037.35 L218.01,1002.02 L220.88,1002.02 L223.74,1002.02 L226.61,1002.02 L229.47,1002.02 L232.34,1002.02 L235.20,1002.02 L238.07,1002.02 L240.94,1037.35 L243.80,1037.35 L246.67,1002.02 L249.53,1002.02 L252.40,1002.02 L255.26,1002.02 L258.13,1002.02 L261.00,1002.02 L263.86,1002.02 L266.73,1002.02 L269.59,1108.00 L272.46,1108.00 L275.33,1002.02 L278.19,1002.02 L281.06,1002.02 L283.92,1002.02 L286.79,1002.02 L289.65,1002.02 L292.52,1002.02 L295.39,1002.02 L298.25,1072.27 L301.12,1072.27 L303.98,1002.02 L306.85,1002.02 L309.72,1002.02 L312.58,1002.02 L315.45,1002.02 L318.31,1002.02 L321.18,1002.02 L324.05,1002.02 L326.91,1037.35 L329.78,1037.35 L332.64,1037.35 L335.51,1037.35 L338.37,1002.02 L341.24,1002.02 L344.11,1002.02 L346.97,1002.02 L349.84,1002.02 L352.70,1002.02 L355.57,1037.35 L358.44,1037.35 L361.30,1002.02 L364.17,1002.02 L367.03,1002.02 L369.90,1002.02 L372.76,1002.02 L375.63,1002.02 L378.50,1002.02 L381.36,1002.02 L384.23,1037.35 L387.09,1037.35 L389.96,1037.35 L392.82,1037.35 L395.69,1037.35 L398.56,1037.35 L401.42,1002.02 L404.29,1002.02 L407.15,1002.02 L410.02,1002.02 L412.89,1037.35 L415.75,1037.35 L418.62,1037.35 L421.48,1037.35 L424.35,1002.02 L427.22,1002.02 L430.08,1002.02 L432.95,1002.02 L435.81,1002.02 L438.68,1002.02 L441.54,1037.35 L444.41,1037.35 L447.28,1002.02 L450.14,1002.02 L453.01,1002.02 L455.87,1002.02 L458.74,1037.35 L461.61,1037.35 L464.47,1002.02 L467.34,1002.02 L470.20,1037.35 L473.07,1037.35 L475.93,1037.35 L478.80,1037.35" fill="none" stroke="#EAB839" stroke-width="1" stroke-opacity="1" stroke-linejoin="round"/><clipPath id="c109_1"><rect x="132.9" y="951.6" width="347.9" height="155.7"/></clipPath><g clip-path="url(#c109_1)"><path d="M134.90,1108.00 L137.77,1108.00 L140.63,1108.00 L143.50,1076.71 L146.36,1076.71 L149.23,1108.00 L152.09,1108.00 L154.96,1076.71 L157.83,1076.71 L160.69,1108.00 L163.56,1108.00 L166.42,1108.00 L169.29,1108.00 L172.16,1108.00 L175.02,1108.00 L177.89,1076.71 L180.75,1076.71 L183.62,1108.00 L186.49,1108.00 L189.35,1108.00 L192.22,1108.00 L195.08,1108.00 L197.95,1108.00 L200.81,1108.00 L203.68,1108.00 L206.55,1076.71 L209.41,1076.71 L212.28,1108.00 L215.14,1108.00 L218.01,1108.00 L220.88,1108.00 L223.74,1108.00 L226.61,1108.00 L229.47,1108.00 L232.34,1108.00 L235.20,1108.00 L238.07,1108.00 L240.94,1076.71 L243.80,1076.71 L246.67,1108.00 L249.53,1108.00 L252.40,1108.00 L255.26,1108.00 L258.13,1108.00 L261.00,1108.00 L263.86,1108.00 L266.73,1108.00 L269.59,1006.06 L272.46,1006.06 L275.33,1108.00 L278.19,1108.00 L281.06,1108.00 L283.92,1108.00 L286.79,1108.00 L289.65,1108.00 L292.52,1108.00 L295.39,1108.00 L298.25,1041.38 L301.12,1041.38 L303.98,1108.00 L306.85,1108.00 L309.72,1108.00 L312.58,1108.00 L315.45,1108.00 L318.31,1108.00 L321.18,1108.00 L324.05,1108.00 L326.91,1076.71 L329.78,1076.71 L332.64,1108.00 L335.51,1108.00 L338.37,1108.00 L341.24,1108.00 L344.11,1108.00 L346.97,1108.00 L349.84,1108.00 L352.70,1108.00 L355.57,1076.71 L358.44,1076.71 L361.30,1108.00 L364.17,1108.00 L367.03,1108.00 L369.90,1108.00 L372.76,1108.00 L375.63,1108.00 L378.50,1108.00 L381.36,1108.00 L384.23,1076.71 L387.09,1076.71 L389.96,1076.71 L392.82,1076.71 L395.69,1076.71 L398.56,1076.71 L401.42,1108.00 L404.29,1108.00 L407.15,1108.00 L410.02,1108.00 L412.89,1076.71 L415.75,1076.71 L418.62,1076.71 L421.48,1076.71 L424.35,1108.00 L427.22,1108.00 L430.08,1108.00 L432.95,1108.00 L435.81,1108.00 L438.68,1108.00 L441.54,1076.71 L444.41,1076.71 L447.28,1108.00 L450.14,1108.00 L453.01,1108.00 L455.87,1108.00 L458.74,1076.71 L461.61,1076.71 L464.47,1108.00 L467.34,1108.00 L470.20,1076.71 L473.07,1076.71 L475.93,1076.71 L478.80,1076.71 L478.80,1108.00 L134.90,1108.00 Z" fill="#7EB26D" fill-opacity="0.1"/><path d="M134.90,1108.00 L137.77,1108.00 L140.63,1108.00 L143.50,1076.71 L146.36,1076.71 L149.23,1108.00 L152.09,1108.00 L154.96,1076.71 L157.83,1076.71 L160.69,1108.00 L163.56,1108.00 L166.42,1108.00 L169.29,1108.00 L172.16,1108.00 L175.02,1108.00 L177.89,1076.71 L180.75,1076.71 L183.62,1108.00 L186.49,1108.00 L189.35,1108.00 L192.22,1108.00 L195.08,1108.00 L197.95,1108.00 L200.81,1108.00 L203.68,1108.00 L206.55,1076.71 L209.41,1076.71 L212.28,1108.00 L215.14,1108.00 L218.01,1108.00 L220.88,1108.00 L223.74,1108.00 L226.61,1108.00 L229.47,1108.00 L232.34,1108.00 L235.20,1108.00 L238.07,1108.00 L240.94,1076.71 L243.80,1076.71 L246.67,1108.00 L249.53,1108.00 L252.40,1108.00 L255.26,1108.00 L258.13,1108.00 L261.00,1108.00 L263.86,1108.00 L266.73,1108.00 L269.59,1006.06 L272.46,1006.06 L275.33,1108.00 L278.19,1108.00 L281.06,1108.00 L283.92,1108.00 L286.79,1108.00 L289.65,1108.00 L292.52,1108.00 L295.39,1108.00 L298.25,1041.38 L301.12,1041.38 L303.98,1108.00 L306.85,1108.00 L309.72,1108.00 L312.58,1108.00 L315.45,1108.00 L318.31,1108.00 L321.18,1108.00 L324.05,1108.00 L326.91,1076.71 L329.78,1076.71 L332.64,1108.00 L335.51,1108.00 L338.37,1108.00 L341.24,1108.00 L344.11,1108.00 L346.97,1108.00 L349.84,1108.00 L352.70,1108.00 L355.57,1076.71 L358.44,1076.71 L361.30,1108.00 L364.17,1108.00 L367.03,1108.00 L369.90,1108.00 L372.76,1108.00 L375.63,1108.00 L378.50,1108.00 L381.36,1108.00 L384.23,1076.71 L387.09,1076.71 L389.96,1076.71 L392.82,1076.71 L395.69,1076.71 L398.56,1076.71 L401.42,1108.00 L404.29,1108.00 L407.15,1108.00 L410.02,1108.00 L412.89,1076.71 L415.75,1076.71 L418.62,1076.71 L421.48,1076.71 L424.35,1108.00 L427.22,1108.00 L430.08,1108.00 L432.95,1108.00 L435.81,1108.00 L438.68,1108.00 L441.54,1076.71 L444.41,1076.71 L447.28,1108.00 L450.14,1108.00 L453.01,1108.00 L455.87,1108.00 L458.74,1076.71 L461.61,1076.71 L464.47,1108.00 L467.34,1108.00 L470.20,1076.71 L473.07,1076.71 L475.93,1076.71 L478.80,1076.71" fill="none" stroke="#7EB26D" stroke-width="1" stroke-opacity="1" stroke-linejoin="round"/></g></svg>
<div class="yl" style="right:1271.1px;top:1098.8px">0</div>
<div class="yl" style="right:1271.1px;top:1048.3px">0.00500</div>
<div class="yl" style="right:1271.1px;top:997.9px">0.0100</div>
<div class="yl" style="right:1271.1px;top:947.4px">0.0150</div>
<div class="xl" style="left:110.8px;top:1114.1px">07:00</div>
<div class="xl" style="left:168.1px;top:1114.1px">07:10</div>
<div class="xl" style="left:225.4px;top:1114.1px">07:20</div>
<div class="xl" style="left:282.7px;top:1114.1px">07:30</div>
<div class="xl" style="left:340.1px;top:1114.1px">07:40</div>
<div class="xl" style="left:397.4px;top:1114.1px">07:50</div>
<div class="lg" style="left:92px;top:1138.3px"><span class="li"><i style="background:#7EB26D"></i>success</span><span class="li"><i style="background:#EAB839"></i>failed</span></div>
<div class="pn" style="left:513px;top:906px;width:432px;height:258px"></div>
<div class="pt" style="left:513px;top:914px;width:432px">NPS by integration</div>
<svg style="left:0;top:0;overflow:visible" width="1" height="1"><line x1="574.8" y1="1107.5" x2="918.8" y2="1107.5" stroke="#e7e8e9"/><line x1="574.8" y1="1057.5" x2="918.8" y2="1057.5" stroke="#e7e8e9"/><line x1="574.8" y1="1006.5" x2="918.8" y2="1006.5" stroke="#e7e8e9"/><line x1="574.8" y1="956.5" x2="918.8" y2="956.5" stroke="#e7e8e9"/><line x1="580.5" y1="956.6" x2="580.5" y2="1108.0" stroke="#e7e8e9"/><line x1="637.5" y1="956.6" x2="637.5" y2="1108.0" stroke="#e7e8e9"/><line x1="694.5" y1="956.6" x2="694.5" y2="1108.0" stroke="#e7e8e9"/><line x1="752.5" y1="956.6" x2="752.5" y2="1108.0" stroke="#e7e8e9"/><line x1="809.5" y1="956.6" x2="809.5" y2="1108.0" stroke="#e7e8e9"/><line x1="866.5" y1="956.6" x2="866.5" y2="1108.0" stroke="#e7e8e9"/><path d="M574.80,1002.02 L577.67,1002.02 L580.53,1002.02 L583.40,1037.35 L586.27,1037.35 L589.13,1037.35 L592.00,1037.35 L594.87,1037.35 L597.73,1037.35 L600.60,1002.02 L603.47,1002.02 L606.33,1002.02 L609.20,1002.02 L612.07,1002.02 L614.93,1002.02 L617.80,1037.35 L620.67,1037.35 L623.53,1037.35 L626.40,1037.35 L629.27,1002.02 L632.13,1002.02 L635.00,1002.02 L637.87,1002.02 L640.73,1002.02 L643.60,1002.02 L646.47,1037.35 L649.33,1037.35 L652.20,1037.35 L655.07,1037.35 L657.93,1002.02 L660.80,1002.02 L663.67,1002.02 L666.53,1002.02 L669.40,1002.02 L672.27,1002.02 L675.13,1002.02 L678.00,1002.02 L680.87,1037.35 L683.73,1037.35 L686.60,1002.02 L689.47,1002.02 L692.33,1002.02 L695.20,1002.02 L698.07,1002.02 L700.93,1002.02 L703.80,1002.02 L706.67,1002.02 L709.53,1108.00 L712.40,1108.00 L715.27,1002.02 L718.13,1002.02 L721.00,1002.02 L723.87,1002.02 L726.73,1002.02 L729.60,1002.02 L732.47,1002.02 L735.33,1002.02 L738.20,1072.27 L741.07,1072.27 L743.93,1002.02 L746.80,1002.02 L749.67,1002.02 L752.53,1002.02 L755.40,1002.02 L758.27,1002.02 L761.13,1002.02 L764.00,1002.02 L766.87,1037.35 L769.73,1037.35 L772.60,1037.35 L775.47,1037.35 L778.33,1002.02 L781.20,1002.02 L784.07,1002.02 L786.93,1002.02 L789.80,1002.02 L792.67,1002.02 L795.53,1037.35 L798.40,1037.35 L801.27,1002.02 L804.13,1002.02 L807.00,1002.02 L809.87,1002.02 L812.73,1002.02 L815.60,1002.02 L818.47,1002.02 L821.33,1002.02 L824.20,1037.35 L827.07,1037.35 L829.93,1037.35 L832.80,1037.35 L835.67,1037.35 L838.53,1037.35 L841.40,1002.02 L844.27,1002.02 L847.13,1002.02 L850.00,1002.02 L852.87,1037.35 L855.73,1037.35 L858.60,1037.35 L861.47,1037.35 L864.33,1002.02 L867.20,1002.02 L870.07,1002.02 L872.93,1002.02 L875.80,1002.02 L878.67,1002.02 L881.53,1037.35 L884.40,1037.35 L887.27,1002.02 L890.13,1002.02 L893.00,1002.02 L895.87,1002.02 L898.73,1037.35 L901.60,1037.35 L904.47,1002.02 L907.33,1002.02 L910.20,1037.35 L913.07,1037.35 L915.93,1037.35 L918.80,1037.35 L918.80,1108.00 L574.80,1108.00 Z" fill="#6ED0E0" fill-opacity="0.1"/><path d="M574.80,1002.02 L577.67,1002.02 L580.53,1002.02 L583.40,1037.35 L586.27,1037.35 L589.13,1037.35 L592.00,1037.35 L594.87,1037.35 L597.73,1037.35 L600.60,1002.02 L603.47,1002.02 L606.33,1002.02 L609.20,1002.02 L612.07,1002.02 L614.93,1002.02 L617.80,1037.35 L620.67,1037.35 L623.53,1037.35 L626.40,1037.35 L629.27,1002.02 L632.13,1002.02 L635.00,1002.02 L637.87,1002.02 L640.73,1002.02 L643.60,1002.02 L646.47,1037.35 L649.33,1037.35 L652.20,1037.35 L655.07,1037.35 L657.93,1002.02 L660.80,1002.02 L663.67,1002.02 L666.53,1002.02 L669.40,1002.02 L672.27,1002.02 L675.13,1002.02 L678.00,1002.02 L680.87,1037.35 L683.73,1037.35 L686.60,1002.02 L689.47,1002.02 L692.33,1002.02 L695.20,1002.02 L698.07,1002.02 L700.93,1002.02 L703.80,1002.02 L706.67,1002.02 L709.53,1108.00 L712.40,1108.00 L715.27,1002.02 L718.13,1002.02 L721.00,1002.02 L723.87,1002.02 L726.73,1002.02 L729.60,1002.02 L732.47,1002.02 L735.33,1002.02 L738.20,1072.27 L741.07,1072.27 L743.93,1002.02 L746.80,1002.02 L749.67,1002.02 L752.53,1002.02 L755.40,1002.02 L758.27,1002.02 L761.13,1002.02 L764.00,1002.02 L766.87,1037.35 L769.73,1037.35 L772.60,1037.35 L775.47,1037.35 L778.33,1002.02 L781.20,1002.02 L784.07,1002.02 L786.93,1002.02 L789.80,1002.02 L792.67,1002.02 L795.53,1037.35 L798.40,1037.35 L801.27,1002.02 L804.13,1002.02 L807.00,1002.02 L809.87,1002.02 L812.73,1002.02 L815.60,1002.02 L818.47,1002.02 L821.33,1002.02 L824.20,1037.35 L827.07,1037.35 L829.93,1037.35 L832.80,1037.35 L835.67,1037.35 L838.53,1037.35 L841.40,1002.02 L844.27,1002.02 L847.13,1002.02 L850.00,1002.02 L852.87,1037.35 L855.73,1037.35 L858.60,1037.35 L861.47,1037.35 L864.33,1002.02 L867.20,1002.02 L870.07,1002.02 L872.93,1002.02 L875.80,1002.02 L878.67,1002.02 L881.53,1037.35 L884.40,1037.35 L887.27,1002.02 L890.13,1002.02 L893.00,1002.02 L895.87,1002.02 L898.73,1037.35 L901.60,1037.35 L904.47,1002.02 L907.33,1002.02 L910.20,1037.35 L913.07,1037.35 L915.93,1037.35 L918.80,1037.35" fill="none" stroke="#6ED0E0" stroke-width="1" stroke-opacity="1" stroke-linejoin="round"/><clipPath id="c123_1"><rect x="572.8" y="951.6" width="348.0" height="155.7"/></clipPath><g clip-path="url(#c123_1)"><path d="M574.80,1108.00 L577.67,1108.00 L580.53,1108.00 L583.40,1076.71 L586.27,1076.71 L589.13,1108.00 L592.00,1108.00 L594.87,1076.71 L597.73,1076.71 L600.60,1108.00 L603.47,1108.00 L606.33,1108.00 L609.20,1108.00 L612.07,1108.00 L614.93,1108.00 L617.80,1076.71 L620.67,1076.71 L623.53,1108.00 L626.40,1108.00 L629.27,1108.00 L632.13,1108.00 L635.00,1108.00 L637.87,1108.00 L640.73,1108.00 L643.60,1108.00 L646.47,1076.71 L649.33,1076.71 L652.20,1108.00 L655.07,1108.00 L657.93,1108.00 L660.80,1108.00 L663.67,1108.00 L666.53,1108.00 L669.40,1108.00 L672.27,1108.00 L675.13,1108.00 L678.00,1108.00 L680.87,1076.71 L683.73,1076.71 L686.60,1108.00 L689.47,1108.00 L692.33,1108.00 L695.20,1108.00 L698.07,1108.00 L700.93,1108.00 L703.80,1108.00 L706.67,1108.00 L709.53,1006.06 L712.40,1006.06 L715.27,1108.00 L718.13,1108.00 L721.00,1108.00 L723.87,1108.00 L726.73,1108.00 L729.60,1108.00 L732.47,1108.00 L735.33,1108.00 L738.20,1041.38 L741.07,1041.38 L743.93,1108.00 L746.80,1108.00 L749.67,1108.00 L752.53,1108.00 L755.40,1108.00 L758.27,1108.00 L761.13,1108.00 L764.00,1108.00 L766.87,1076.71 L769.73,1076.71 L772.60,1108.00 L775.47,1108.00 L778.33,1108.00 L781.20,1108.00 L784.07,1108.00 L786.93,1108.00 L789.80,1108.00 L792.67,1108.00 L795.53,1076.71 L798.40,1076.71 L801.27,1108.00 L804.13,1108.00 L807.00,1108.00 L809.87,1108.00 L812.73,1108.00 L815.60,1108.00 L818.47,1108.00 L821.33,1108.00 L824.20,1076.71 L827.07,1076.71 L829.93,1076.71 L832.80,1076.71 L835.67,1076.71 L838.53,1076.71 L841.40,1108.00 L844.27,1108.00 L847.13,1108.00 L850.00,1108.00 L852.87,1076.71 L855.73,1076.71 L858.60,1076.71 L861.47,1076.71 L864.33,1108.00 L867.20,1108.00 L870.07,1108.00 L872.93,1108.00 L875.80,1108.00 L878.67,1108.00 L881.53,1076.71 L884.40,1076.71 L887.27,1108.00 L890.13,1108.00 L893.00,1108.00 L895.87,1108.00 L898.73,1076.71 L901.60,1076.71 L904.47,1108.00 L907.33,1108.00 L910.20,1076.71 L913.07,1076.71 L915.93,1076.71 L918.80,1076.71 L918.80,1108.00 L574.80,1108.00 Z" fill="#7EB26D" fill-opacity="0.1"/><path d="M574.80,1108.00 L577.67,1108.00 L580.53,1108.00 L583.40,1076.71 L586.27,1076.71 L589.13,1108.00 L592.00,1108.00 L594.87,1076.71 L597.73,1076.71 L600.60,1108.00 L603.47,1108.00 L606.33,1108.00 L609.20,1108.00 L612.07,1108.00 L614.93,1108.00 L617.80,1076.71 L620.67,1076.71 L623.53,1108.00 L626.40,1108.00 L629.27,1108.00 L632.13,1108.00 L635.00,1108.00 L637.87,1108.00 L640.73,1108.00 L643.60,1108.00 L646.47,1076.71 L649.33,1076.71 L652.20,1108.00 L655.07,1108.00 L657.93,1108.00 L660.80,1108.00 L663.67,1108.00 L666.53,1108.00 L669.40,1108.00 L672.27,1108.00 L675.13,1108.00 L678.00,1108.00 L680.87,1076.71 L683.73,1076.71 L686.60,1108.00 L689.47,1108.00 L692.33,1108.00 L695.20,1108.00 L698.07,1108.00 L700.93,1108.00 L703.80,1108.00 L706.67,1108.00 L709.53,1006.06 L712.40,1006.06 L715.27,1108.00 L718.13,1108.00 L721.00,1108.00 L723.87,1108.00 L726.73,1108.00 L729.60,1108.00 L732.47,1108.00 L735.33,1108.00 L738.20,1041.38 L741.07,1041.38 L743.93,1108.00 L746.80,1108.00 L749.67,1108.00 L752.53,1108.00 L755.40,1108.00 L758.27,1108.00 L761.13,1108.00 L764.00,1108.00 L766.87,1076.71 L769.73,1076.71 L772.60,1108.00 L775.47,1108.00 L778.33,1108.00 L781.20,1108.00 L784.07,1108.00 L786.93,1108.00 L789.80,1108.00 L792.67,1108.00 L795.53,1076.71 L798.40,1076.71 L801.27,1108.00 L804.13,1108.00 L807.00,1108.00 L809.87,1108.00 L812.73,1108.00 L815.60,1108.00 L818.47,1108.00 L821.33,1108.00 L824.20,1076.71 L827.07,1076.71 L829.93,1076.71 L832.80,1076.71 L835.67,1076.71 L838.53,1076.71 L841.40,1108.00 L844.27,1108.00 L847.13,1108.00 L850.00,1108.00 L852.87,1076.71 L855.73,1076.71 L858.60,1076.71 L861.47,1076.71 L864.33,1108.00 L867.20,1108.00 L870.07,1108.00 L872.93,1108.00 L875.80,1108.00 L878.67,1108.00 L881.53,1076.71 L884.40,1076.71 L887.27,1108.00 L890.13,1108.00 L893.00,1108.00 L895.87,1108.00 L898.73,1076.71 L901.60,1076.71 L904.47,1108.00 L907.33,1108.00 L910.20,1076.71 L913.07,1076.71 L915.93,1076.71 L918.80,1076.71" fill="none" stroke="#7EB26D" stroke-width="1" stroke-opacity="1" stroke-linejoin="round"/></g><path d="M574.80,1108.00 L918.80,1108.00" fill="none" stroke="#EAB839" stroke-width="2" stroke-opacity="0.7" stroke-linejoin="round"/></svg>
<div class="yl" style="right:831.2px;top:1098.8px">0</div>
<div class="yl" style="right:831.2px;top:1048.3px">0.00500</div>
<div class="yl" style="right:831.2px;top:997.9px">0.0100</div>
<div class="yl" style="right:831.2px;top:947.4px">0.0150</div>
<div class="xl" style="left:550.7px;top:1114.1px">07:00</div>
<div class="xl" style="left:608.0px;top:1114.1px">07:10</div>
<div class="xl" style="left:665.4px;top:1114.1px">07:20</div>
<div class="xl" style="left:722.7px;top:1114.1px">07:30</div>
<div class="xl" style="left:780.0px;top:1114.1px">07:40</div>
<div class="xl" style="left:837.4px;top:1114.1px">07:50</div>
<div class="lg" style="left:532px;top:1138.3px"><span class="li"><i style="background:#7EB26D"></i>success - email</span><span class="li"><i style="background:#EAB839"></i>success - </span><span class="li"><i style="background:#6ED0E0"></i>failed - email</span></div>
<div class="pn" style="left:952px;top:906px;width:432px;height:258px"></div>
<div class="pt" style="left:952px;top:914px;width:432px">Latency</div>
<svg style="left:0;top:0;overflow:visible" width="1" height="1"><line x1="1008.9" y1="1107.5" x2="1357.8" y2="1107.5" stroke="#e7e8e9"/><line x1="1008.9" y1="1057.5" x2="1357.8" y2="1057.5" stroke="#e7e8e9"/><line x1="1008.9" y1="1006.5" x2="1357.8" y2="1006.5" stroke="#e7e8e9"/><line x1="1008.9" y1="956.5" x2="1357.8" y2="956.5" stroke="#e7e8e9"/><line x1="1014.5" y1="956.6" x2="1014.5" y2="1108.0" stroke="#e7e8e9"/><line x1="1072.5" y1="956.6" x2="1072.5" y2="1108.0" stroke="#e7e8e9"/><line x1="1130.5" y1="956.6" x2="1130.5" y2="1108.0" stroke="#e7e8e9"/><line x1="1188.5" y1="956.6" x2="1188.5" y2="1108.0" stroke="#e7e8e9"/><line x1="1246.5" y1="956.6" x2="1246.5" y2="1108.0" stroke="#e7e8e9"/><line x1="1305.5" y1="956.6" x2="1305.5" y2="1108.0" stroke="#e7e8e9"/><path d="M1008.90,1007.07 L1351.66,1007.07 L1355.34,1108.00 L1355.34,1108.00 L1008.90,1108.00 Z" fill="#7EB26D" fill-opacity="0.1"/><path d="M1008.90,1007.07 L1351.66,1007.07 L1355.34,1108.00" fill="none" stroke="#7EB26D" stroke-width="1" stroke-opacity="1" stroke-linejoin="round"/><path d="M1008.90,1057.53 L1348.59,1057.53 L1352.27,1054.51 L1353.81,1057.53 L1355.34,1108.00 L1355.34,1108.00 L1008.90,1108.00 Z" fill="#EAB839" fill-opacity="0.1"/><path d="M1008.90,1057.53 L1348.59,1057.53 L1352.27,1054.51 L1353.81,1057.53 L1355.34,1108.00" fill="none" stroke="#EAB839" stroke-width="1" stroke-opacity="1" stroke-linejoin="round"/><path d="M1008.90,1107.70 L1121.92,1107.70 L1128.07,1090.84 L1131.14,1107.70 L1151.10,1107.70 L1157.24,1090.84 L1160.32,1107.70 L1214.98,1107.70 L1221.13,1090.84 L1224.20,1107.70 L1355.34,1107.70 L1355.34,1108.00 L1008.90,1108.00 Z" fill="#6ED0E0" fill-opacity="0.1"/><path d="M1008.90,1107.70 L1121.92,1107.70 L1128.07,1090.84 L1131.14,1107.70 L1151.10,1107.70 L1157.24,1090.84 L1160.32,1107.70 L1214.98,1107.70 L1221.13,1090.84 L1224.20,1107.70 L1355.34,1107.70" fill="none" stroke="#6ED0E0" stroke-width="1" stroke-opacity="1" stroke-linejoin="round"/></svg>
<div class="yl" style="right:397.1px;top:1098.8px">0 ms</div>
<div class="yl" style="right:397.1px;top:1048.3px">500 ms</div>
<div class="yl" style="right:397.1px;top:997.9px">1 s</div>
<div class="yl" style="right:397.1px;top:947.4px">1.50 s</div>
<div class="xl" style="left:984.9px;top:1114.1px">07:00</div>
<div class="xl" style="left:1043.0px;top:1114.1px">07:10</div>
<div class="xl" style="left:1101.2px;top:1114.1px">07:20</div>
<div class="xl" style="left:1159.3px;top:1114.1px">07:30</div>
<div class="xl" style="left:1217.5px;top:1114.1px">07:40</div>
<div class="xl" style="left:1275.6px;top:1114.1px">07:50</div>
<div class="lg" style="left:971px;top:1138.3px"><span class="li"><i style="background:#7EB26D"></i>99th Percentile</span><span class="li"><i style="background:#EAB839"></i>50th Percentile</span><span class="li"><i style="background:#6ED0E0"></i>Average</span></div>
<div class="rh" style="top:1172px"><svg width="10" height="10" viewBox="0 0 10 10"><path d="M2.3 3.5 L5 6.2 L7.7 3.5" fill="none" stroke="#24292e" stroke-width="1.5" stroke-linecap="round" stroke-linejoin="round"/></svg>Alertmanager Configuration Object Store (Alertmanager accesses)</div>
<div class="pn" style="left:73px;top:1210px;width:432px;height:258px"></div>
<div class="pt" style="left:73px;top:1218px;width:432px">Operations / sec</div>
<svg style="left:0;top:0;overflow:visible" width="1" height="1"><line x1="121.0" y1="1393.5" x2="478.8" y2="1393.5" stroke="#e7e8e9"/><line x1="121.0" y1="1360.5" x2="478.8" y2="1360.5" stroke="#e7e8e9"/><line x1="121.0" y1="1326.5" x2="478.8" y2="1326.5" stroke="#e7e8e9"/><line x1="121.0" y1="1293.5" x2="478.8" y2="1293.5" stroke="#e7e8e9"/><line x1="121.0" y1="1260.5" x2="478.8" y2="1260.5" stroke="#e7e8e9"/><line x1="126.5" y1="1260.6" x2="126.5" y2="1394.0" stroke="#e7e8e9"/><line x1="186.5" y1="1260.6" x2="186.5" y2="1394.0" stroke="#e7e8e9"/><line x1="245.5" y1="1260.6" x2="245.5" y2="1394.0" stroke="#e7e8e9"/><line x1="305.5" y1="1260.6" x2="305.5" y2="1394.0" stroke="#e7e8e9"/><line x1="365.5" y1="1260.6" x2="365.5" y2="1394.0" stroke="#e7e8e9"/><line x1="424.5" y1="1260.6" x2="424.5" y2="1394.0" stroke="#e7e8e9"/><path d="M121.00,1297.95 L183.35,1297.95 L186.11,1293.28 L189.18,1293.28 L191.95,1297.95 L198.70,1297.95 L201.47,1294.62 L204.54,1294.62 L207.30,1297.95 L273.03,1297.95 L275.79,1293.28 L278.86,1293.28 L281.63,1297.95 L287.77,1297.95 L290.53,1294.62 L293.60,1294.62 L296.37,1297.95 L363.01,1297.95 L365.78,1293.28 L368.85,1293.28 L371.61,1297.95 L377.76,1297.95 L380.52,1294.62 L383.59,1294.62 L386.36,1297.95 L452.08,1297.95 L454.84,1293.28 L457.92,1293.28 L460.68,1297.95 L467.13,1297.95 L469.28,1294.95 L471.12,1297.95 L472.35,1317.30 L474.19,1347.31 L475.73,1394.00 L475.73,1394.00 L121.00,1394.00 Z" fill="#BA43A9" fill-opacity="1.0"/><path d="M121.00,1297.95 L468.05,1297.95 L472.35,1317.30 L474.19,1347.31 L475.73,1394.00 L475.73,1394.00 L121.00,1394.00 Z" fill="#1F78C1" fill-opacity="1.0"/><path d="M121.00,1320.63 L469.59,1320.63 L473.27,1333.97 L475.73,1394.00 L475.73,1394.00 L121.00,1394.00 Z" fill="#EF843C" fill-opacity="1.0"/></svg>
<div class="yl" style="right:1285.0px;top:1384.8px">0 rd/s</div>
<div class="yl" style="right:1285.0px;top:1351.5px">1 rd/s</div>
<div class="yl" style="right:1285.0px;top:1318.1px">2 rd/s</div>
<div class="yl" style="right:1285.0px;top:1284.7px">3 rd/s</div>
<div class="yl" style="right:1285.0px;top:1251.4px">4 rd/s</div>
<div class="xl" style="left:97.1px;top:1400.1px">07:00</div>
<div class="xl" style="left:156.8px;top:1400.1px">07:10</div>
<div class="xl" style="left:216.4px;top:1400.1px">07:20</div>
<div class="xl" style="left:276.0px;top:1400.1px">07:30</div>
<div class="xl" style="left:335.7px;top:1400.1px">07:40</div>
<div class="xl" style="left:395.3px;top:1400.1px">07:50</div>
<div class="lg" style="left:92px;top:1424.3px"><span class="li"><i style="background:#7EB26D"></i>attributes</span><span class="li"><i style="background:#EAB839"></i>delete</span><span class="li"><i style="background:#6ED0E0"></i>exists</span><span class="li"><i style="background:#EF843C"></i>get</span><span class="li"><i style="background:#E24D42"></i>get_range</span><span class="li"><i style="background:#1F78C1"></i>iter</span></div>
<div class="lg" style="left:92px;top:1442.3px"><span class="li"><i style="background:#BA43A9"></i>upload</span></div>
<div class="pn" style="left:513px;top:1210px;width:432px;height:258px"></div>
<div class="pt" style="left:513px;top:1218px;width:432px">Error rate</div>
<svg style="left:0;top:0;overflow:visible" width="1" height="1"><line x1="559.1" y1="1393.5" x2="918.8" y2="1393.5" stroke="#e7e8e9"/><line x1="559.1" y1="1360.5" x2="918.8" y2="1360.5" stroke="#e7e8e9"/><line x1="559.1" y1="1326.5" x2="918.8" y2="1326.5" stroke="#e7e8e9"/><line x1="559.1" y1="1293.5" x2="918.8" y2="1293.5" stroke="#e7e8e9"/><line x1="559.1" y1="1260.5" x2="918.8" y2="1260.5" stroke="#e7e8e9"/><line x1="564.5" y1="1260.6" x2="564.5" y2="1394.0" stroke="#e7e8e9"/><line x1="624.5" y1="1260.6" x2="624.5" y2="1394.0" stroke="#e7e8e9"/><line x1="684.5" y1="1260.6" x2="684.5" y2="1394.0" stroke="#e7e8e9"/><line x1="744.5" y1="1260.6" x2="744.5" y2="1394.0" stroke="#e7e8e9"/><line x1="804.5" y1="1260.6" x2="804.5" y2="1394.0" stroke="#e7e8e9"/><line x1="864.5" y1="1260.6" x2="864.5" y2="1394.0" stroke="#e7e8e9"/><path d="M559.10,1394.00 L915.20,1394.00" fill="none" stroke="#9c4c98" stroke-width="2" stroke-opacity="1" stroke-linejoin="round"/></svg>
<div class="yl" style="right:846.9px;top:1384.8px">0%</div>
<div class="yl" style="right:846.9px;top:1351.5px">25%</div>
<div class="yl" style="right:846.9px;top:1318.1px">50%</div>
<div class="yl" style="right:846.9px;top:1284.7px">75%</div>
<div class="yl" style="right:846.9px;top:1251.4px">100%</div>
<div class="xl" style="left:535.3px;top:1400.1px">07:00</div>
<div class="xl" style="left:595.2px;top:1400.1px">07:10</div>
<div class="xl" style="left:655.2px;top:1400.1px">07:20</div>
<div class="xl" style="left:715.1px;top:1400.1px">07:30</div>
<div class="xl" style="left:775.1px;top:1400.1px">07:40</div>
<div class="xl" style="left:835.0px;top:1400.1px">07:50</div>
<div class="lg" style="left:532px;top:1424.3px"><span class="li"><i style="background:#7EB26D"></i>attributes</span><span class="li"><i style="background:#EAB839"></i>delete</span><span class="li"><i style="background:#6ED0E0"></i>exists</span><span class="li"><i style="background:#EF843C"></i>get</span><span class="li"><i style="background:#E24D42"></i>get_range</span><span class="li"><i style="background:#1F78C1"></i>iter</span></div>
<div class="lg" style="left:532px;top:1442.3px"><span class="li"><i style="background:#BA43A9"></i>upload</span></div>
<div class="pn" style="left:952px;top:1210px;width:432px;height:258px"></div>
<div class="pt" style="left:952px;top:1218px;width:432px">Inflight requests</div>
<svg style="left:0;top:0;overflow:visible" width="1" height="1"><line x1="999.0" y1="1430.5" x2="1357.8" y2="1430.5" stroke="#e7e8e9"/><line x1="999.0" y1="1387.5" x2="1357.8" y2="1387.5" stroke="#e7e8e9"/><line x1="999.0" y1="1345.5" x2="1357.8" y2="1345.5" stroke="#e7e8e9"/><line x1="999.0" y1="1302.5" x2="1357.8" y2="1302.5" stroke="#e7e8e9"/><line x1="999.0" y1="1260.5" x2="1357.8" y2="1260.5" stroke="#e7e8e9"/><line x1="1004.5" y1="1260.6" x2="1004.5" y2="1430.6" stroke="#e7e8e9"/><line x1="1064.5" y1="1260.6" x2="1064.5" y2="1430.6" stroke="#e7e8e9"/><line x1="1124.5" y1="1260.6" x2="1124.5" y2="1430.6" stroke="#e7e8e9"/><line x1="1184.5" y1="1260.6" x2="1184.5" y2="1430.6" stroke="#e7e8e9"/><line x1="1243.5" y1="1260.6" x2="1243.5" y2="1430.6" stroke="#e7e8e9"/><line x1="1303.5" y1="1260.6" x2="1303.5" y2="1430.6" stroke="#e7e8e9"/></svg>
<div class="yl" style="right:407.0px;top:1421.4px">0</div>
<div class="yl" style="right:407.0px;top:1378.9px">0.250</div>
<div class="yl" style="right:407.0px;top:1336.4px">0.500</div>
<div class="yl" style="right:407.0px;top:1293.9px">0.750</div>
<div class="yl" style="right:407.0px;top:1251.4px">1</div>
<div class="xl" style="left:975.1px;top:1436.7px">07:00</div>
<div class="xl" style="left:1034.9px;top:1436.7px">07:10</div>
<div class="xl" style="left:1094.7px;top:1436.7px">07:20</div>
<div class="xl" style="left:1154.5px;top:1436.7px">07:30</div>
<div class="xl" style="left:1214.3px;top:1436.7px">07:40</div>
<div class="xl" style="left:1274.1px;top:1436.7px">07:50</div>
<div class="nd" style="left:952px;width:432px;top:1313.6px">No data</div>
<div class="rh" style="top:1476px"><svg width="10" height="10" viewBox="0 0 10 10"><path d="M2.3 3.5 L5 6.2 L7.7 3.5" fill="none" stroke="#24292e" stroke-width="1.5" stroke-linecap="round" stroke-linejoin="round"/></svg></div>
<div class="pn" style="left:73px;top:1514px;width:432px;height:258px"></div>
<div class="pt" style="left:73px;top:1522px;width:432px">Latency of op: Attributes</div>
<svg style="left:0;top:0;overflow:visible" width="1" height="1"><line x1="141.2" y1="1715.5" x2="478.8" y2="1715.5" stroke="#e7e8e9"/><line x1="141.2" y1="1677.5" x2="478.8" y2="1677.5" stroke="#e7e8e9"/><line x1="141.2" y1="1639.5" x2="478.8" y2="1639.5" stroke="#e7e8e9"/><line x1="141.2" y1="1601.5" x2="478.8" y2="1601.5" stroke="#e7e8e9"/><line x1="141.2" y1="1564.5" x2="478.8" y2="1564.5" stroke="#e7e8e9"/><line x1="146.5" y1="1564.6" x2="146.5" y2="1716.0" stroke="#e7e8e9"/><line x1="202.5" y1="1564.6" x2="202.5" y2="1716.0" stroke="#e7e8e9"/><line x1="259.5" y1="1564.6" x2="259.5" y2="1716.0" stroke="#e7e8e9"/><line x1="315.5" y1="1564.6" x2="315.5" y2="1716.0" stroke="#e7e8e9"/><line x1="371.5" y1="1564.6" x2="371.5" y2="1716.0" stroke="#e7e8e9"/><line x1="427.5" y1="1564.6" x2="427.5" y2="1716.0" stroke="#e7e8e9"/><path d="M141.20,1716.00 L475.42,1716.00" fill="none" stroke="#7EB26D" stroke-width="2" stroke-opacity="0.75" stroke-linejoin="round"/></svg>
<div class="yl" style="right:1264.8px;top:1706.8px">0 ms</div>
<div class="yl" style="right:1264.8px;top:1669.0px">0.250 ms</div>
<div class="yl" style="right:1264.8px;top:1631.1px">0.500 ms</div>
<div class="yl" style="right:1264.8px;top:1593.2px">0.750 ms</div>
<div class="yl" style="right:1264.8px;top:1555.4px">1 ms</div>
<div class="xl" style="left:117.0px;top:1722.1px">07:00</div>
<div class="xl" style="left:173.2px;top:1722.1px">07:10</div>
<div class="xl" style="left:229.5px;top:1722.1px">07:20</div>
<div class="xl" style="left:285.8px;top:1722.1px">07:30</div>
<div class="xl" style="left:342.0px;top:1722.1px">07:40</div>
<div class="xl" style="left:398.3px;top:1722.1px">07:50</div>
<div class="lg" style="left:92px;top:1746.3px"><span class="li"><i style="background:#7EB26D"></i>99th Percentile</span><span class="li"><i style="background:#EAB839"></i>50th Percentile</span><span class="li"><i style="background:#6ED0E0"></i>Average</span></div>
<div class="pn" style="left:513px;top:1514px;width:432px;height:258px"></div>
<div class="pt" style="left:513px;top:1522px;width:432px">Latency of op: Exists</div>
<svg style="left:0;top:0;overflow:visible" width="1" height="1"><line x1="581.2" y1="1715.5" x2="918.8" y2="1715.5" stroke="#e7e8e9"/><line x1="581.2" y1="1677.5" x2="918.8" y2="1677.5" stroke="#e7e8e9"/><line x1="581.2" y1="1639.5" x2="918.8" y2="1639.5" stroke="#e7e8e9"/><line x1="581.2" y1="1601.5" x2="918.8" y2="1601.5" stroke="#e7e8e9"/><line x1="581.2" y1="1564.5" x2="918.8" y2="1564.5" stroke="#e7e8e9"/><line x1="586.5" y1="1564.6" x2="586.5" y2="1716.0" stroke="#e7e8e9"/><line x1="642.5" y1="1564.6" x2="642.5" y2="1716.0" stroke="#e7e8e9"/><line x1="699.5" y1="1564.6" x2="699.5" y2="1716.0" stroke="#e7e8e9"/><line x1="755.5" y1="1564.6" x2="755.5" y2="1716.0" stroke="#e7e8e9"/><line x1="811.5" y1="1564.6" x2="811.5" y2="1716.0" stroke="#e7e8e9"/><line x1="867.5" y1="1564.6" x2="867.5" y2="1716.0" stroke="#e7e8e9"/><path d="M581.20,1716.00 L915.42,1716.00" fill="none" stroke="#7EB26D" stroke-width="2" stroke-opacity="0.75" stroke-linejoin="round"/></svg>
<div class="yl" style="right:824.8px;top:1706.8px">0 ms</div>
<div class="yl" style="right:824.8px;top:1669.0px">0.250 ms</div>
<div class="yl" style="right:824.8px;top:1631.1px">0.500 ms</div>
<div class="yl" style="right:824.8px;top:1593.2px">0.750 ms</div>
<div class="yl" style="right:824.8px;top:1555.4px">1 ms</div>
<div class="xl" style="left:557.0px;top:1722.1px">07:00</div>
<div class="xl" style="left:613.2px;top:1722.1px">07:10</div>
<div class="xl" style="left:669.5px;top:1722.1px">07:20</div>
<div class="xl" style="left:725.8px;top:1722.1px">07:30</div>
<div class="xl" style="left:782.0px;top:1722.1px">07:40</div>
<div class="xl" style="left:838.3px;top:1722.1px">07:50</div>
<div class="lg" style="left:532px;top:1746.3px"><span class="li"><i style="background:#7EB26D"></i>99th Percentile</span><span class="li"><i style="background:#EAB839"></i>50th Percentile</span><span class="li"><i style="background:#6ED0E0"></i>Average</span></div>
<div class="pn" style="left:952px;top:1514px;width:432px;height:258px"></div>
<div class="pt" style="left:952px;top:1522px;width:432px">Latency of op: Get</div>
<svg style="left:0;top:0;overflow:visible" width="1" height="1"><line x1="1002.1" y1="1715.5" x2="1357.8" y2="1715.5" stroke="#e7e8e9"/><line x1="1002.1" y1="1665.5" x2="1357.8" y2="1665.5" stroke="#e7e8e9"/><line x1="1002.1" y1="1614.5" x2="1357.8" y2="1614.5" stroke="#e7e8e9"/><line x1="1002.1" y1="1564.5" x2="1357.8" y2="1564.5" stroke="#e7e8e9"/><line x1="1007.5" y1="1564.6" x2="1007.5" y2="1716.0" stroke="#e7e8e9"/><line x1="1066.5" y1="1564.6" x2="1066.5" y2="1716.0" stroke="#e7e8e9"/><line x1="1126.5" y1="1564.6" x2="1126.5" y2="1716.0" stroke="#e7e8e9"/><line x1="1185.5" y1="1564.6" x2="1185.5" y2="1716.0" stroke="#e7e8e9"/><line x1="1244.5" y1="1564.6" x2="1244.5" y2="1716.0" stroke="#e7e8e9"/><line x1="1304.5" y1="1564.6" x2="1304.5" y2="1716.0" stroke="#e7e8e9"/><path d="M1002.10,1705.91 L1051.55,1705.91 L1055.24,1655.44 L1055.24,1655.44 L1058.93,1705.91 L1093.02,1705.91 L1096.71,1655.44 L1096.71,1655.44 L1100.39,1705.91 L1119.75,1705.91 L1123.43,1655.44 L1123.43,1655.44 L1127.12,1705.91 L1158.45,1705.91 L1162.13,1675.63 L1164.59,1675.63 L1168.28,1705.91 L1173.19,1705.91 L1176.88,1675.63 L1176.88,1675.63 L1180.56,1705.91 L1182.10,1705.91 L1185.79,1675.63 L1188.24,1675.63 L1191.93,1705.91 L1196.84,1705.91 L1200.53,1655.44 L1200.53,1655.44 L1204.22,1705.91 L1208.82,1705.91 L1212.51,1655.44 L1212.51,1655.44 L1216.20,1705.91 L1226.64,1705.91 L1230.33,1655.44 L1230.33,1655.44 L1234.01,1705.91 L1288.99,1705.91 L1292.68,1645.35 L1295.14,1645.35 L1298.82,1705.91 L1318.79,1705.91 L1322.48,1675.63 L1322.48,1675.63 L1326.16,1705.91 L1348.58,1705.91 L1351.66,1604.97 L1354.73,1705.91 L1354.73,1716.00 L1002.10,1716.00 Z" fill="#7EB26D" fill-opacity="0.1"/><path d="M1002.10,1705.91 L1051.55,1705.91 L1055.24,1655.44 L1055.24,1655.44 L1058.93,1705.91 L1093.02,1705.91 L1096.71,1655.44 L1096.71,1655.44 L1100.39,1705.91 L1119.75,1705.91 L1123.43,1655.44 L1123.43,1655.44 L1127.12,1705.91 L1158.45,1705.91 L1162.13,1675.63 L1164.59,1675.63 L1168.28,1705.91 L1173.19,1705.91 L1176.88,1675.63 L1176.88,1675.63 L1180.56,1705.91 L1182.10,1705.91 L1185.79,1675.63 L1188.24,1675.63 L1191.93,1705.91 L1196.84,1705.91 L1200.53,1655.44 L1200.53,1655.44 L1204.22,1705.91 L1208.82,1705.91 L1212.51,1655.44 L1212.51,1655.44 L1216.20,1705.91 L1226.64,1705.91 L1230.33,1655.44 L1230.33,1655.44 L1234.01,1705.91 L1288.99,1705.91 L1292.68,1645.35 L1295.14,1645.35 L1298.82,1705.91 L1318.79,1705.91 L1322.48,1675.63 L1322.48,1675.63 L1326.16,1705.91 L1348.58,1705.91 L1351.66,1604.97 L1354.73,1705.91" fill="none" stroke="#7EB26D" stroke-width="1" stroke-opacity="1" stroke-linejoin="round"/><path d="M1002.10,1710.95 L1354.73,1710.95 L1354.73,1716.00 L1002.10,1716.00 Z" fill="#EAB839" fill-opacity="0.1"/><path d="M1002.10,1710.95 L1354.73,1710.95" fill="none" stroke="#EAB839" stroke-width="1" stroke-opacity="1" stroke-linejoin="round"/><path d="M1002.10,1716.00 L1034.35,1716.00 L1037.42,1639.29 L1040.50,1639.29 L1043.57,1716.00 L1316.03,1716.00 L1319.10,1639.29 L1322.17,1639.29 L1325.24,1716.00 L1354.73,1716.00 L1354.73,1716.00 L1002.10,1716.00 Z" fill="#6ED0E0" fill-opacity="0.1"/><path d="M1002.10,1716.00 L1034.35,1716.00 L1037.42,1639.29 L1040.50,1639.29 L1043.57,1716.00 L1316.03,1716.00 L1319.10,1639.29 L1322.17,1639.29 L1325.24,1716.00 L1354.73,1716.00" fill="none" stroke="#6ED0E0" stroke-width="1" stroke-opacity="1" stroke-linejoin="round"/></svg>
<div class="yl" style="right:403.9px;top:1706.8px">0 ms</div>
<div class="yl" style="right:403.9px;top:1656.3px">5 ms</div>
<div class="yl" style="right:403.9px;top:1605.9px">10 ms</div>
<div class="yl" style="right:403.9px;top:1555.4px">15 ms</div>
<div class="xl" style="left:978.2px;top:1722.1px">07:00</div>
<div class="xl" style="left:1037.5px;top:1722.1px">07:10</div>
<div class="xl" style="left:1096.8px;top:1722.1px">07:20</div>
<div class="xl" style="left:1156.0px;top:1722.1px">07:30</div>
<div class="xl" style="left:1215.3px;top:1722.1px">07:40</div>
<div class="xl" style="left:1274.6px;top:1722.1px">07:50</div>
<div class="lg" style="left:971px;top:1746.3px"><span class="li"><i style="background:#7EB26D"></i>99th Percentile</span><span class="li"><i style="background:#EAB839"></i>50th Percentile</span><span class="li"><i style="background:#6ED0E0"></i>Average</span></div>
<div class="rh" style="top:1780px"><svg width="10" height="10" viewBox="0 0 10 10"><path d="M2.3 3.5 L5 6.2 L7.7 3.5" fill="none" stroke="#24292e" stroke-width="1.5" stroke-linecap="round" stroke-linejoin="round"/></svg></div>
<div class="pn" style="left:73px;top:1818px;width:432px;height:258px"></div>
<div class="pt" style="left:73px;top:1826px;width:432px">Latency of op: GetRange</div>
<svg style="left:0;top:0;overflow:visible" width="1" height="1"><line x1="141.2" y1="2019.5" x2="478.8" y2="2019.5" stroke="#e7e8e9"/><line x1="141.2" y1="1981.5" x2="478.8" y2="1981.5" stroke="#e7e8e9"/><line x1="141.2" y1="1943.5" x2="478.8" y2="1943.5" stroke="#e7e8e9"/><line x1="141.2" y1="1905.5" x2="478.8" y2="1905.5" stroke="#e7e8e9"/><line x1="141.2" y1="1868.5" x2="478.8" y2="1868.5" stroke="#e7e8e9"/><line x1="146.5" y1="1868.6" x2="146.5" y2="2020.0" stroke="#e7e8e9"/><line x1="202.5" y1="1868.6" x2="202.5" y2="2020.0" stroke="#e7e8e9"/><line x1="259.5" y1="1868.6" x2="259.5" y2="2020.0" stroke="#e7e8e9"/><line x1="315.5" y1="1868.6" x2="315.5" y2="2020.0" stroke="#e7e8e9"/><line x1="371.5" y1="1868.6" x2="371.5" y2="2020.0" stroke="#e7e8e9"/><line x1="427.5" y1="1868.6" x2="427.5" y2="2020.0" stroke="#e7e8e9"/><path d="M141.20,2020.00 L475.42,2020.00" fill="none" stroke="#7EB26D" stroke-width="2" stroke-opacity="0.75" stroke-linejoin="round"/></svg>
<div class="yl" style="right:1264.8px;top:2010.8px">0 ms</div>
<div class="yl" style="right:1264.8px;top:1973.0px">0.250 ms</div>
<div class="yl" style="right:1264.8px;top:1935.1px">0.500 ms</div>
<div class="yl" style="right:1264.8px;top:1897.2px">0.750 ms</div>
<div class="yl" style="right:1264.8px;top:1859.4px">1 ms</div>
<div class="xl" style="left:117.0px;top:2026.1px">07:00</div>
<div class="xl" style="left:173.2px;top:2026.1px">07:10</div>
<div class="xl" style="left:229.5px;top:2026.1px">07:20</div>
<div class="xl" style="left:285.8px;top:2026.1px">07:30</div>
<div class="xl" style="left:342.0px;top:2026.1px">07:40</div>
<div class="xl" style="left:398.3px;top:2026.1px">07:50</div>
<div class="lg" style="left:92px;top:2050.3px"><span class="li"><i style="background:#7EB26D"></i>99th Percentile</span><span class="li"><i style="background:#EAB839"></i>50th Percentile</span><span class="li"><i style="background:#6ED0E0"></i>Average</span></div>
<div class="pn" style="left:513px;top:1818px;width:432px;height:258px"></div>
<div class="pt" style="left:513px;top:1826px;width:432px">Latency of op: Upload</div>
<svg style="left:0;top:0;overflow:visible" width="1" height="1"><line x1="569.9" y1="2019.5" x2="918.8" y2="2019.5" stroke="#e7e8e9"/><line x1="569.9" y1="1981.5" x2="918.8" y2="1981.5" stroke="#e7e8e9"/><line x1="569.9" y1="1943.5" x2="918.8" y2="1943.5" stroke="#e7e8e9"/><line x1="569.9" y1="1905.5" x2="918.8" y2="1905.5" stroke="#e7e8e9"/><line x1="569.9" y1="1868.5" x2="918.8" y2="1868.5" stroke="#e7e8e9"/><line x1="575.5" y1="1868.6" x2="575.5" y2="2020.0" stroke="#e7e8e9"/><line x1="633.5" y1="1868.6" x2="633.5" y2="2020.0" stroke="#e7e8e9"/><line x1="691.5" y1="1868.6" x2="691.5" y2="2020.0" stroke="#e7e8e9"/><line x1="749.5" y1="1868.6" x2="749.5" y2="2020.0" stroke="#e7e8e9"/><line x1="807.5" y1="1868.6" x2="807.5" y2="2020.0" stroke="#e7e8e9"/><line x1="866.5" y1="1868.6" x2="866.5" y2="2020.0" stroke="#e7e8e9"/><path d="M569.90,2020.00 L631.02,2020.00 L634.09,1906.45 L636.55,1906.45 L639.62,2020.00 L645.45,2020.00 L648.53,1982.15 L650.98,1982.15 L654.05,2020.00 L718.24,2020.00 L721.32,1911.37 L723.77,1911.37 L726.84,2020.00 L732.37,2020.00 L735.44,1906.45 L737.90,1906.45 L740.97,2020.00 L805.16,2020.00 L808.23,1982.15 L810.69,1982.15 L813.76,2020.00 L819.90,2020.00 L822.98,1982.15 L825.43,1982.15 L828.50,2020.00 L892.69,2020.00 L895.77,1982.15 L898.22,1982.15 L901.29,2020.00 L907.44,2020.00 L910.51,1909.10 L912.96,1909.10 L916.04,2020.00 L916.34,2020.00 L916.34,2020.00 L569.90,2020.00 Z" fill="#7EB26D" fill-opacity="0.1"/><path d="M569.90,2020.00 L631.02,2020.00 L634.09,1906.45 L636.55,1906.45 L639.62,2020.00 L645.45,2020.00 L648.53,1982.15 L650.98,1982.15 L654.05,2020.00 L718.24,2020.00 L721.32,1911.37 L723.77,1911.37 L726.84,2020.00 L732.37,2020.00 L735.44,1906.45 L737.90,1906.45 L740.97,2020.00 L805.16,2020.00 L808.23,1982.15 L810.69,1982.15 L813.76,2020.00 L819.90,2020.00 L822.98,1982.15 L825.43,1982.15 L828.50,2020.00 L892.69,2020.00 L895.77,1982.15 L898.22,1982.15 L901.29,2020.00 L907.44,2020.00 L910.51,1909.10 L912.96,1909.10 L916.04,2020.00 L916.34,2020.00" fill="none" stroke="#7EB26D" stroke-width="1" stroke-opacity="1" stroke-linejoin="round"/><path d="M569.90,2020.00 L631.02,2020.00 L634.09,1959.44 L636.55,1959.44 L639.62,2020.00 L645.45,2020.00 L648.53,1999.18 L650.98,1999.18 L654.05,2020.00 L718.24,2020.00 L721.32,1996.15 L723.77,1996.15 L726.84,2020.00 L732.37,2020.00 L735.44,1956.79 L737.90,1956.79 L740.97,2020.00 L805.16,2020.00 L808.23,1999.18 L810.69,1999.18 L813.76,2020.00 L819.90,2020.00 L822.98,1999.18 L825.43,1999.18 L828.50,2020.00 L892.69,2020.00 L895.77,1999.18 L898.22,1999.18 L901.29,2020.00 L907.44,2020.00 L910.51,1993.50 L912.96,1993.50 L916.04,2020.00 L916.34,2020.00 L916.34,2020.00 L569.90,2020.00 Z" fill="#EAB839" fill-opacity="0.15"/><path d="M569.90,2020.00 L631.02,2020.00 L634.09,1959.44 L636.55,1959.44 L639.62,2020.00 L645.45,2020.00 L648.53,1999.18 L650.98,1999.18 L654.05,2020.00 L718.24,2020.00 L721.32,1996.15 L723.77,1996.15 L726.84,2020.00 L732.37,2020.00 L735.44,1956.79 L737.90,1956.79 L740.97,2020.00 L805.16,2020.00 L808.23,1999.18 L810.69,1999.18 L813.76,2020.00 L819.90,2020.00 L822.98,1999.18 L825.43,1999.18 L828.50,2020.00 L892.69,2020.00 L895.77,1999.18 L898.22,1999.18 L901.29,2020.00 L907.44,2020.00 L910.51,1993.50 L912.96,1993.50 L916.04,2020.00 L916.34,2020.00" fill="none" stroke="#EAB839" stroke-width="1" stroke-opacity="1" stroke-linejoin="round"/><path d="M569.90,2020.00 L645.45,2020.00 L648.53,1925.38 L650.98,1925.38 L654.05,2020.00 L718.24,2020.00 L721.32,1965.87 L723.77,1965.87 L726.84,2020.00 L892.69,2020.00 L895.77,1965.87 L898.22,1965.87 L901.29,2020.00 L916.34,2020.00 L916.34,2020.00 L569.90,2020.00 Z" fill="#6ED0E0" fill-opacity="0.1"/><path d="M569.90,2020.00 L645.45,2020.00 L648.53,1925.38 L650.98,1925.38 L654.05,2020.00 L718.24,2020.00 L721.32,1965.87 L723.77,1965.87 L726.84,2020.00 L892.69,2020.00 L895.77,1965.87 L898.22,1965.87 L901.29,2020.00 L916.34,2020.00" fill="none" stroke="#6ED0E0" stroke-width="1" stroke-opacity="1" stroke-linejoin="round"/></svg>
<div class="yl" style="right:836.1px;top:2010.8px">0 ms</div>
<div class="yl" style="right:836.1px;top:1973.0px">100 ms</div>
<div class="yl" style="right:836.1px;top:1935.1px">200 ms</div>
<div class="yl" style="right:836.1px;top:1897.2px">300 ms</div>
<div class="yl" style="right:836.1px;top:1859.4px">400 ms</div>
<div class="xl" style="left:545.9px;top:2026.1px">07:00</div>
<div class="xl" style="left:604.0px;top:2026.1px">07:10</div>
<div class="xl" style="left:662.2px;top:2026.1px">07:20</div>
<div class="xl" style="left:720.3px;top:2026.1px">07:30</div>
<div class="xl" style="left:778.5px;top:2026.1px">07:40</div>
<div class="xl" style="left:836.6px;top:2026.1px">07:50</div>
<div class="lg" style="left:532px;top:2050.3px"><span class="li"><i style="background:#7EB26D"></i>99th Percentile</span><span class="li"><i style="background:#EAB839"></i>50th Percentile</span><span class="li"><i style="background:#6ED0E0"></i>Average</span></div>
<div class="pn" style="left:952px;top:1818px;width:432px;height:258px"></div>
<div class="pt" style="left:952px;top:1826px;width:432px">Latency of op: Delete</div>
<svg style="left:0;top:0;overflow:visible" width="1" height="1"><line x1="1020.2" y1="2019.5" x2="1357.8" y2="2019.5" stroke="#e7e8e9"/><line x1="1020.2" y1="1981.5" x2="1357.8" y2="1981.5" stroke="#e7e8e9"/><line x1="1020.2" y1="1943.5" x2="1357.8" y2="1943.5" stroke="#e7e8e9"/><line x1="1020.2" y1="1905.5" x2="1357.8" y2="1905.5" stroke="#e7e8e9"/><line x1="1020.2" y1="1868.5" x2="1357.8" y2="1868.5" stroke="#e7e8e9"/><line x1="1025.5" y1="1868.6" x2="1025.5" y2="2020.0" stroke="#e7e8e9"/><line x1="1081.5" y1="1868.6" x2="1081.5" y2="2020.0" stroke="#e7e8e9"/><line x1="1138.5" y1="1868.6" x2="1138.5" y2="2020.0" stroke="#e7e8e9"/><line x1="1194.5" y1="1868.6" x2="1194.5" y2="2020.0" stroke="#e7e8e9"/><line x1="1250.5" y1="1868.6" x2="1250.5" y2="2020.0" stroke="#e7e8e9"/><line x1="1306.5" y1="1868.6" x2="1306.5" y2="2020.0" stroke="#e7e8e9"/><path d="M1020.20,2020.00 L1354.42,2020.00" fill="none" stroke="#7EB26D" stroke-width="2" stroke-opacity="0.75" stroke-linejoin="round"/></svg>
<div class="yl" style="right:385.8px;top:2010.8px">0 ms</div>
<div class="yl" style="right:385.8px;top:1973.0px">0.250 ms</div>
<div class="yl" style="right:385.8px;top:1935.1px">0.500 ms</div>
<div class="yl" style="right:385.8px;top:1897.2px">0.750 ms</div>
<div class="yl" style="right:385.8px;top:1859.4px">1 ms</div>
<div class="xl" style="left:996.0px;top:2026.1px">07:00</div>
<div class="xl" style="left:1052.2px;top:2026.1px">07:10</div>
<div class="xl" style="left:1108.5px;top:2026.1px">07:20</div>
<div class="xl" style="left:1164.8px;top:2026.1px">07:30</div>
<div class="xl" style="left:1221.0px;top:2026.1px">07:40</div>
<div class="xl" style="left:1277.3px;top:2026.1px">07:50</div>
<div class="lg" style="left:971px;top:2050.3px"><span class="li"><i style="background:#7EB26D"></i>99th Percentile</span><span class="li"><i style="background:#EAB839"></i>50th Percentile</span><span class="li"><i style="background:#6ED0E0"></i>Average</span></div>
<div class="rh" style="top:2084px"><svg width="10" height="10" viewBox="0 0 10 10"><path d="M2.3 3.5 L5 6.2 L7.7 3.5" fill="none" stroke="#24292e" stroke-width="1.5" stroke-linecap="round" stroke-linejoin="round"/></svg>Replication</div>
<div class="pn" style="left:73px;top:2122px;width:432px;height:258px"></div>
<div class="pt" style="left:73px;top:2130px;width:432px">Per pod tenants</div>
<svg style="left:0;top:0;overflow:visible" width="1" height="1"><line x1="103.2" y1="2305.5" x2="478.8" y2="2305.5" stroke="#e7e8e9"/><line x1="103.2" y1="2272.5" x2="478.8" y2="2272.5" stroke="#e7e8e9"/><line x1="103.2" y1="2238.5" x2="478.8" y2="2238.5" stroke="#e7e8e9"/><line x1="103.2" y1="2205.5" x2="478.8" y2="2205.5" stroke="#e7e8e9"/><line x1="103.2" y1="2172.5" x2="478.8" y2="2172.5" stroke="#e7e8e9"/><line x1="109.5" y1="2172.6" x2="109.5" y2="2306.0" stroke="#e7e8e9"/><line x1="171.5" y1="2172.6" x2="171.5" y2="2306.0" stroke="#e7e8e9"/><line x1="234.5" y1="2172.6" x2="234.5" y2="2306.0" stroke="#e7e8e9"/><line x1="296.5" y1="2172.6" x2="296.5" y2="2306.0" stroke="#e7e8e9"/><line x1="359.5" y1="2172.6" x2="359.5" y2="2306.0" stroke="#e7e8e9"/><line x1="422.5" y1="2172.6" x2="422.5" y2="2306.0" stroke="#e7e8e9"/><path d="M103.20,2195.94 L478.80,2195.94 L478.80,2306.00 L103.20,2306.00 Z" fill="#E24D42" fill-opacity="1.0"/><path d="M103.20,2219.29 L478.80,2219.29 L478.80,2306.00 L103.20,2306.00 Z" fill="#EF843C" fill-opacity="1.0"/><path d="M103.20,2232.63 L478.80,2232.63 L478.80,2306.00 L103.20,2306.00 Z" fill="#6ED0E0" fill-opacity="1.0"/><path d="M103.20,2259.31 L478.80,2259.31 L478.80,2306.00 L103.20,2306.00 Z" fill="#EAB839" fill-opacity="1.0"/><path d="M103.20,2279.32 L478.80,2279.32 L478.80,2306.00 L103.20,2306.00 Z" fill="#7EB26D" fill-opacity="1.0"/></svg>
<div class="yl" style="right:1302.8px;top:2296.8px">0</div>
<div class="yl" style="right:1302.8px;top:2263.5px">10</div>
<div class="yl" style="right:1302.8px;top:2230.1px">20</div>
<div class="yl" style="right:1302.8px;top:2196.8px">30</div>
<div class="yl" style="right:1302.8px;top:2163.4px">40</div>
<div class="xl" style="left:79.6px;top:2312.1px">07:00</div>
<div class="xl" style="left:142.2px;top:2312.1px">07:10</div>
<div class="xl" style="left:204.8px;top:2312.1px">07:20</div>
<div class="xl" style="left:267.4px;top:2312.1px">07:30</div>
<div class="xl" style="left:330.0px;top:2312.1px">07:40</div>
<div class="xl" style="left:392.6px;top:2312.1px">07:50</div>
<div class="lg" style="left:92px;top:2336.3px"><span class="li"><i style="background:#7EB26D"></i>alertmanager-0</span><span class="li"><i style="background:#EAB839"></i>alertmanager-1</span><span class="li"><i style="background:#6ED0E0"></i>alertmanager-2</span></div>
<div class="lg" style="left:92px;top:2354.3px"><span class="li"><i style="background:#EF843C"></i>alertmanager-3</span><span class="li"><i style="background:#E24D42"></i>alertmanager-4</span></div>
<div class="pn" style="left:513px;top:2122px;width:432px;height:258px"></div>
<div class="pt" style="left:513px;top:2130px;width:432px">Per pod alerts</div>
<svg style="left:0;top:0;overflow:visible" width="1" height="1"><line x1="564.1" y1="2305.5" x2="918.8" y2="2305.5" stroke="#e7e8e9"/><line x1="564.1" y1="2272.5" x2="918.8" y2="2272.5" stroke="#e7e8e9"/><line x1="564.1" y1="2238.5" x2="918.8" y2="2238.5" stroke="#e7e8e9"/><line x1="564.1" y1="2205.5" x2="918.8" y2="2205.5" stroke="#e7e8e9"/><line x1="564.1" y1="2172.5" x2="918.8" y2="2172.5" stroke="#e7e8e9"/><line x1="569.5" y1="2172.6" x2="569.5" y2="2306.0" stroke="#e7e8e9"/><line x1="628.5" y1="2172.6" x2="628.5" y2="2306.0" stroke="#e7e8e9"/><line x1="687.5" y1="2172.6" x2="687.5" y2="2306.0" stroke="#e7e8e9"/><line x1="747.5" y1="2172.6" x2="747.5" y2="2306.0" stroke="#e7e8e9"/><line x1="806.5" y1="2172.6" x2="806.5" y2="2306.0" stroke="#e7e8e9"/><line x1="865.5" y1="2172.6" x2="865.5" y2="2306.0" stroke="#e7e8e9"/><path d="M564.10,2197.55 L918.80,2197.55 L918.80,2306.00 L564.10,2306.00 Z" fill="#E24D42" fill-opacity="1.0"/><path d="M564.10,2243.44 L918.80,2243.44 L918.80,2306.00 L564.10,2306.00 Z" fill="#EF843C" fill-opacity="1.0"/><path d="M564.10,2290.66 L918.80,2290.66 L918.80,2306.00 L564.10,2306.00 Z" fill="#7EB26D" fill-opacity="1.0"/></svg>
<div class="yl" style="right:841.9px;top:2296.8px">0</div>
<div class="yl" style="right:841.9px;top:2263.5px">2.50 K</div>
<div class="yl" style="right:841.9px;top:2230.1px">5 K</div>
<div class="yl" style="right:841.9px;top:2196.8px">7.50 K</div>
<div class="yl" style="right:841.9px;top:2163.4px">10 K</div>
<div class="xl" style="left:540.2px;top:2312.1px">07:00</div>
<div class="xl" style="left:599.3px;top:2312.1px">07:10</div>
<div class="xl" style="left:658.4px;top:2312.1px">07:20</div>
<div class="xl" style="left:717.5px;top:2312.1px">07:30</div>
<div class="xl" style="left:776.6px;top:2312.1px">07:40</div>
<div class="xl" style="left:835.8px;top:2312.1px">07:50</div>
<div class="lg" style="left:532px;top:2336.3px"><span class="li"><i style="background:#7EB26D"></i>alertmanager-0</span><span class="li"><i style="background:#EAB839"></i>alertmanager-1</span><span class="li"><i style="background:#6ED0E0"></i>alertmanager-2</span></div>
<div class="lg" style="left:532px;top:2354.3px"><span class="li"><i style="background:#EF843C"></i>alertmanager-3</span><span class="li"><i style="background:#E24D42"></i>alertmanager-4</span></div>
<div class="pn" style="left:952px;top:2122px;width:432px;height:258px"></div>
<div class="pt" style="left:952px;top:2130px;width:432px">Per pod silences</div>
<svg style="left:0;top:0;overflow:visible" width="1" height="1"><line x1="999.0" y1="2305.5" x2="1357.8" y2="2305.5" stroke="#e7e8e9"/><line x1="999.0" y1="2272.5" x2="1357.8" y2="2272.5" stroke="#e7e8e9"/><line x1="999.0" y1="2238.5" x2="1357.8" y2="2238.5" stroke="#e7e8e9"/><line x1="999.0" y1="2205.5" x2="1357.8" y2="2205.5" stroke="#e7e8e9"/><line x1="999.0" y1="2172.5" x2="1357.8" y2="2172.5" stroke="#e7e8e9"/><line x1="1004.5" y1="2172.6" x2="1004.5" y2="2306.0" stroke="#e7e8e9"/><line x1="1064.5" y1="2172.6" x2="1064.5" y2="2306.0" stroke="#e7e8e9"/><line x1="1124.5" y1="2172.6" x2="1124.5" y2="2306.0" stroke="#e7e8e9"/><line x1="1184.5" y1="2172.6" x2="1184.5" y2="2306.0" stroke="#e7e8e9"/><line x1="1243.5" y1="2172.6" x2="1243.5" y2="2306.0" stroke="#e7e8e9"/><line x1="1303.5" y1="2172.6" x2="1303.5" y2="2306.0" stroke="#e7e8e9"/></svg>
<div class="yl" style="right:407.0px;top:2296.8px">0</div>
<div class="yl" style="right:407.0px;top:2263.5px">0.250</div>
<div class="yl" style="right:407.0px;top:2230.1px">0.500</div>
<div class="yl" style="right:407.0px;top:2196.8px">0.750</div>
<div class="yl" style="right:407.0px;top:2163.4px">1</div>
<div class="xl" style="left:975.1px;top:2312.1px">07:00</div>
<div class="xl" style="left:1034.9px;top:2312.1px">07:10</div>
<div class="xl" style="left:1094.7px;top:2312.1px">07:20</div>
<div class="xl" style="left:1154.5px;top:2312.1px">07:30</div>
<div class="xl" style="left:1214.3px;top:2312.1px">07:40</div>
<div class="xl" style="left:1274.1px;top:2312.1px">07:50</div>
<div class="lg" style="left:971px;top:2336.3px"><span class="li"><i style="background:#7EB26D"></i>alertmanager-0</span><span class="li"><i style="background:#EAB839"></i>alertmanager-1</span><span class="li"><i style="background:#6ED0E0"></i>alertmanager-2</span></div>
<div class="lg" style="left:971px;top:2354.3px"><span class="li"><i style="background:#EF843C"></i>alertmanager-3</span><span class="li"><i style="background:#E24D42"></i>alertmanager-4</span></div>
<div class="rh" style="top:2388px"><svg width="10" height="10" viewBox="0 0 10 10"><path d="M2.3 3.5 L5 6.2 L7.7 3.5" fill="none" stroke="#24292e" stroke-width="1.5" stroke-linecap="round" stroke-linejoin="round"/></svg>Tenant configuration sync</div></div></body></html>
